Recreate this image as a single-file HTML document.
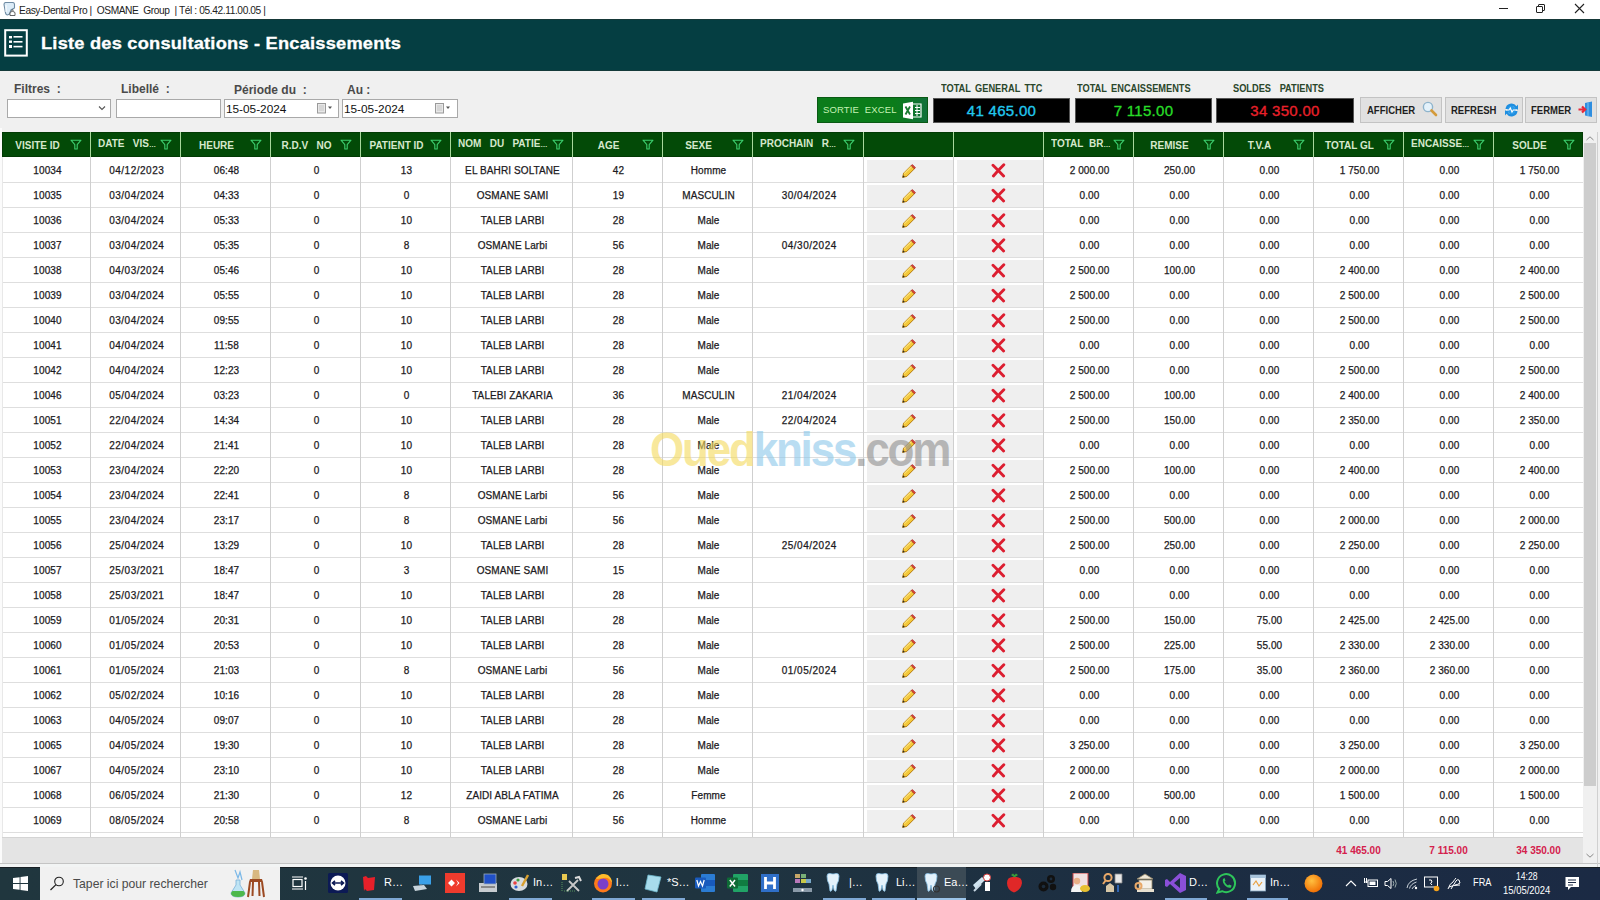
<!DOCTYPE html>
<html><head><meta charset="utf-8"><title>Liste des consultations</title>
<style>
*{margin:0;padding:0;box-sizing:border-box}
html,body{width:1600px;height:900px;overflow:hidden;background:#f0f0f0;font-family:"Liberation Sans",sans-serif;position:relative}
.a{position:absolute}
#titlebar{left:0;top:0;width:1600px;height:19px;background:#fff}
#ttxt{left:19px;top:4.5px;font-size:10.2px;color:#222;white-space:pre;letter-spacing:-0.4px}
#band{left:0;top:19px;width:1600px;height:52px;background:#053e42;border-top:1px solid #163838;border-bottom:1px solid #143a3a}
#btitle{left:41px;top:34px;font-size:16.5px;font-weight:bold;color:#fff;white-space:nowrap;letter-spacing:0.2px;transform:scaleX(1.105);transform-origin:0 0;-webkit-text-stroke:0.3px #fff}
.lbl{position:absolute;font-size:12px;font-weight:bold;color:#4a4a4a;white-space:pre}
.box{position:absolute;background:#fff;border:1px solid #a9a9a9}
.dtxt{position:absolute;font-size:11.8px;color:#111;white-space:nowrap}
.tl{position:absolute;font-size:10.5px;font-weight:bold;color:#2a462a;white-space:pre;word-spacing:2px;transform:scaleX(0.88);transform-origin:0 0}
.blk{position:absolute;background:#000;border:1px solid #555}
.val{position:absolute;font-size:15px;white-space:nowrap;text-align:center;letter-spacing:0.3px;-webkit-text-stroke:0.35px currentColor}
.btn{position:absolute;background:#e1e1e1;border:1px solid #c3c3c3}
.btxt{position:absolute;font-size:11px;font-weight:bold;color:#1e1e1e;white-space:nowrap;transform:scaleX(0.865);transform-origin:0 0}
#hdr{left:2px;top:132px;width:1581px;height:25px;background:#034a07;border:1px solid #023a04}
.hl{position:absolute;top:132px;width:1px;height:25px;background:#a8d89c}
.ht{position:absolute;font-size:10px;font-weight:bold;color:#d6e8cc;white-space:pre;overflow:hidden}
.fn{position:absolute}
.el{font-size:7px;letter-spacing:-0.5px}
#grid{left:2px;top:157px;width:1581px;height:681px;background:#fff;overflow:hidden}
.gl{position:absolute;width:1px;background:#cfcfcf}
.rl{position:absolute;height:1px;background:#dedede}
.t{position:absolute;font-size:10px;color:#1c1a22;text-align:center;white-space:nowrap;letter-spacing:0.1px;-webkit-text-stroke:0.25px #1c1a22}
.bcell{position:absolute;background:#efefef}
.ic{position:absolute}
#foot{left:2px;top:838px;width:1581px;height:25px;background:#e4e4e4}
.ft{position:absolute;font-size:10px;font-weight:bold;color:#d4204c;text-align:center;white-space:nowrap}
#sb{left:1583px;top:132px;width:14px;height:731px;background:#f0f0f0}
#taskbar{left:0;top:867px;width:1600px;height:33px;background:linear-gradient(90deg,#20363e 0%,#1f3440 45%,#1c2d42 75%,#1b2a44 100%);border-top:1px solid #181f24}
.tb{position:absolute;color:#fff;font-size:11px;white-space:nowrap}
.wm{position:absolute;font-weight:bold;font-size:44px;white-space:nowrap;letter-spacing:-2.2px}
</style></head><body>

<div id="titlebar" class="a"></div>
<svg class="a" style="left:3px;top:2px" width="13" height="14" viewBox="0 0 13 14"><path d="M1 2.5 Q1 0.5 3 0.5 H9.5 Q11.5 0.5 11.5 2.5 V6 L8 8 L6.5 12 L4.5 13 Q3 13 2.5 11 Z" fill="#dcecf8" stroke="#6f8ca4" stroke-width="1.1"/><path d="M3 3 V10" stroke="#fff" stroke-width="1"/><path d="M7 13.5 V11 Q7 9.5 9.5 9.5 Q12 9.5 12 11 V13.5 Z" fill="#fff" stroke="#555" stroke-width="0.9"/><path d="M8 8.5 Q9.5 6.5 11 8.5 Z" fill="#333"/></svg>
<div id="ttxt" class="a">Easy-Dental Pro |  OSMANE  Group  | T&eacute;l : 05.42.11.00.05 |</div>
<div class="a" style="left:1499px;top:8px;width:9px;height:1px;background:#222"></div>
<div class="a" style="left:1538px;top:4px;width:7px;height:7px;border:1px solid #222;border-radius:1px"></div>
<div class="a" style="left:1536px;top:6px;width:7px;height:7px;border:1px solid #222;background:#fff;border-radius:1px"></div>
<svg class="a" style="left:1574px;top:3px" width="11" height="11" viewBox="0 0 11 11"><path d="M1 1 L10 10 M10 1 L1 10" stroke="#222" stroke-width="1.1"/></svg>
<div id="band" class="a"></div>
<svg class="a" style="left:4px;top:29px" width="24" height="28" viewBox="0 0 24 28"><rect x="1.2" y="1.2" width="21.6" height="25.4" fill="none" stroke="#fff" stroke-width="2"/><rect x="5" y="7" width="3" height="2.4" fill="#fff"/><rect x="9.5" y="7" width="9" height="1.6" fill="#fff"/><rect x="5" y="11.5" width="3" height="2.4" fill="#fff"/><rect x="9.5" y="12" width="9" height="1.6" fill="#fff"/><rect x="5" y="16" width="3" height="3" fill="#fff"/><rect x="9.5" y="16.8" width="9" height="1.6" fill="#fff"/></svg>
<div id="btitle" class="a">Liste des consultations - Encaissements</div>
<div class="lbl" style="left:14px;top:82px">Filtres  :</div>
<div class="lbl" style="left:121px;top:82px">Libell&eacute;  :</div>
<div class="lbl" style="left:234px;top:83px">P&eacute;riode du  :</div>
<div class="lbl" style="left:347px;top:83px">Au :</div>
<div class="box" style="left:7px;top:99px;width:104px;height:19px"></div>
<svg class="a" style="left:98px;top:105px" width="8" height="6" viewBox="0 0 8 6"><path d="M1 1.5 L4 4.5 L7 1.5" fill="none" stroke="#555" stroke-width="1.1"/></svg>
<div class="box" style="left:116px;top:99px;width:105px;height:19px"></div>
<div class="box" style="left:224px;top:99px;width:115px;height:19px"></div>
<div class="dtxt" style="left:226px;top:102px">15-05-2024</div>
<svg class="a" style="left:317px;top:103px" width="16" height="11" viewBox="0 0 16 11"><rect x="0.5" y="0.5" width="8" height="9.5" fill="#e8e8e8" stroke="#9a9a9a" stroke-width="1"/><path d="M2 3 H7 M2 5 H7 M2 7 H7" stroke="#bbb" stroke-width="0.8"/><path d="M11 3.5 H15 L13 6 Z" fill="#555"/></svg>
<div class="box" style="left:342px;top:99px;width:116px;height:19px"></div>
<div class="dtxt" style="left:344px;top:102px">15-05-2024</div>
<svg class="a" style="left:435px;top:103px" width="16" height="11" viewBox="0 0 16 11"><rect x="0.5" y="0.5" width="8" height="9.5" fill="#e8e8e8" stroke="#9a9a9a" stroke-width="1"/><path d="M2 3 H7 M2 5 H7 M2 7 H7" stroke="#bbb" stroke-width="0.8"/><path d="M11 3.5 H15 L13 6 Z" fill="#555"/></svg>
<div class="a" style="left:817px;top:97px;width:111px;height:26px;background:linear-gradient(90deg,#0b7c1a 0%,#0b7c1a 70%,#11703a 100%);border:1px solid #0a5a14"></div>

<div class="a" style="left:823px;top:104px;font-size:9.5px;color:#c4f2b4;white-space:pre;letter-spacing:0.15px">SORTIE  EXCEL</div>
<svg class="a" style="left:902px;top:101px" width="20" height="19" viewBox="0 0 20 19"><path d="M1 2.5 L11 0.8 V18.2 L1 16.5 Z" fill="#fff"/><path d="M11 3 H19 V16 H11" fill="none" stroke="#fff" stroke-width="1.2"/><path d="M13 6.5 H18 M13 9.5 H18 M13 12.5 H18 M15 4 V15" stroke="#fff" stroke-width="1"/><path d="M3.5 5.5 L8 13.5 M8 5.5 L3.5 13.5" stroke="#1a7a30" stroke-width="1.8"/></svg>
<div class="tl" style="left:941px;top:81.5px">TOTAL GENERAL TTC</div>
<div class="blk" style="left:933px;top:98px;width:137px;height:25px"></div>
<div class="val" style="left:933px;top:102px;width:137px;color:#22c8ee">41 465.00</div>
<div class="tl" style="left:1077px;top:81.5px">TOTAL ENCAISSEMENTS</div>
<div class="blk" style="left:1075px;top:98px;width:137px;height:25px"></div>
<div class="val" style="left:1075px;top:102px;width:137px;color:#28dc28">7 115.00</div>
<div class="tl" style="left:1233px;top:81.5px">SOLDES  PATIENTS</div>
<div class="blk" style="left:1216px;top:98px;width:138px;height:25px"></div>
<div class="val" style="left:1216px;top:102px;width:138px;color:#e8202a">34 350.00</div>
<div class="btn" style="left:1360px;top:97px;width:82px;height:26px"></div>
<div class="btxt" style="left:1367px;top:104px">AFFICHER</div>
<div class="btn" style="left:1445px;top:97px;width:78px;height:26px"></div>
<div class="btxt" style="left:1451px;top:104px">REFRESH</div>
<div class="btn" style="left:1525px;top:97px;width:72px;height:26px"></div>
<div class="btxt" style="left:1531px;top:104px">FERMER</div>
<svg class="a" style="left:1422px;top:101px" width="16" height="16" viewBox="0 0 16 16"><circle cx="6" cy="6" r="4.6" fill="#e4f2fb" stroke="#8fb4cc" stroke-width="1.4"/><path d="M9.5 9.5 L14 14" stroke="#d49a3a" stroke-width="2.6" stroke-linecap="round"/></svg>
<svg class="a" style="left:1504px;top:102px" width="15" height="16" viewBox="0 0 15 16"><path d="M1.5 7 A6 6 0 0 1 12.5 4.2 L14 2.5 V7.5 H9 L11 5.6 A4 4 0 0 0 4 7 Z" fill="#1e8ee0"/><path d="M13.5 9 A6 6 0 0 1 2.5 11.8 L1 13.5 V8.5 H6 L4 10.4 A4 4 0 0 0 11 9 Z" fill="#1e8ee0"/><circle cx="7.5" cy="8" r="4.2" fill="#2a9ae8"/><path d="M2 8 H5 L6.3 6 L8 10 L9.3 8 H13" fill="none" stroke="#fff" stroke-width="1.1"/></svg>
<svg class="a" style="left:1578px;top:101px" width="16" height="17" viewBox="0 0 16 17"><path d="M7 2 L14 0.5 V16 L7 14.5 Z" fill="#2f8ee0"/><path d="M10 1.5 V15.5" stroke="#7cc4f4" stroke-width="1"/><path d="M0.5 8.5 H7 M4 5.5 L7.2 8.5 L4 11.5" fill="none" stroke="#e8283a" stroke-width="2.2"/></svg>
<div id="grid" class="a"></div>
<div id="hdr" class="a"></div>
<div class="fn" style="left:70px;top:139px"><svg class="fn" width="12" height="11" viewBox="0 0 12 11"><path d="M1 1.2 H11 L7.2 5.6 V10 H4.8 V5.6 Z" fill="none" stroke="#3ccf6e" stroke-width="1.1" stroke-linejoin="round"/></svg></div>
<div class="ht" style="left:3px;top:139.6px;width:69px;text-align:center">VISITE ID</div>
<div class="fn" style="left:160px;top:139px"><svg class="fn" width="12" height="11" viewBox="0 0 12 11"><path d="M1 1.2 H11 L7.2 5.6 V10 H4.8 V5.6 Z" fill="none" stroke="#3ccf6e" stroke-width="1.1" stroke-linejoin="round"/></svg></div>
<div class="ht" style="left:98px;top:137.8px;width:62px">DATE&nbsp;&nbsp; VIS<span class=el>&hellip;</span></div>
<div class="fn" style="left:250px;top:139px"><svg class="fn" width="12" height="11" viewBox="0 0 12 11"><path d="M1 1.2 H11 L7.2 5.6 V10 H4.8 V5.6 Z" fill="none" stroke="#3ccf6e" stroke-width="1.1" stroke-linejoin="round"/></svg></div>
<div class="ht" style="left:181px;top:139.6px;width:71px;text-align:center">HEURE</div>
<div class="fn" style="left:340px;top:139px"><svg class="fn" width="12" height="11" viewBox="0 0 12 11"><path d="M1 1.2 H11 L7.2 5.6 V10 H4.8 V5.6 Z" fill="none" stroke="#3ccf6e" stroke-width="1.1" stroke-linejoin="round"/></svg></div>
<div class="ht" style="left:271px;top:139.6px;width:71px;text-align:center">R.D.V&nbsp;&nbsp; NO</div>
<div class="fn" style="left:430px;top:139px"><svg class="fn" width="12" height="11" viewBox="0 0 12 11"><path d="M1 1.2 H11 L7.2 5.6 V10 H4.8 V5.6 Z" fill="none" stroke="#3ccf6e" stroke-width="1.1" stroke-linejoin="round"/></svg></div>
<div class="ht" style="left:361px;top:139.6px;width:71px;text-align:center">PATIENT ID</div>
<div class="fn" style="left:552px;top:139px"><svg class="fn" width="12" height="11" viewBox="0 0 12 11"><path d="M1 1.2 H11 L7.2 5.6 V10 H4.8 V5.6 Z" fill="none" stroke="#3ccf6e" stroke-width="1.1" stroke-linejoin="round"/></svg></div>
<div class="ht" style="left:458px;top:137.8px;width:94px">NOM&nbsp;&nbsp; DU&nbsp;&nbsp; PATIE<span class=el>&hellip;</span></div>
<div class="fn" style="left:642px;top:139px"><svg class="fn" width="12" height="11" viewBox="0 0 12 11"><path d="M1 1.2 H11 L7.2 5.6 V10 H4.8 V5.6 Z" fill="none" stroke="#3ccf6e" stroke-width="1.1" stroke-linejoin="round"/></svg></div>
<div class="ht" style="left:573px;top:139.6px;width:71px;text-align:center">AGE</div>
<div class="fn" style="left:732px;top:139px"><svg class="fn" width="12" height="11" viewBox="0 0 12 11"><path d="M1 1.2 H11 L7.2 5.6 V10 H4.8 V5.6 Z" fill="none" stroke="#3ccf6e" stroke-width="1.1" stroke-linejoin="round"/></svg></div>
<div class="ht" style="left:663px;top:139.6px;width:71px;text-align:center">SEXE</div>
<div class="fn" style="left:843px;top:139px"><svg class="fn" width="12" height="11" viewBox="0 0 12 11"><path d="M1 1.2 H11 L7.2 5.6 V10 H4.8 V5.6 Z" fill="none" stroke="#3ccf6e" stroke-width="1.1" stroke-linejoin="round"/></svg></div>
<div class="ht" style="left:760px;top:137.8px;width:83px">PROCHAIN&nbsp;&nbsp; R<span class=el>&hellip;</span></div>
<div class="fn" style="left:1113px;top:139px"><svg class="fn" width="12" height="11" viewBox="0 0 12 11"><path d="M1 1.2 H11 L7.2 5.6 V10 H4.8 V5.6 Z" fill="none" stroke="#3ccf6e" stroke-width="1.1" stroke-linejoin="round"/></svg></div>
<div class="ht" style="left:1051px;top:137.8px;width:62px">TOTAL&nbsp; BR<span class=el>&hellip;</span></div>
<div class="fn" style="left:1203px;top:139px"><svg class="fn" width="12" height="11" viewBox="0 0 12 11"><path d="M1 1.2 H11 L7.2 5.6 V10 H4.8 V5.6 Z" fill="none" stroke="#3ccf6e" stroke-width="1.1" stroke-linejoin="round"/></svg></div>
<div class="ht" style="left:1134px;top:139.6px;width:71px;text-align:center">REMISE</div>
<div class="fn" style="left:1293px;top:139px"><svg class="fn" width="12" height="11" viewBox="0 0 12 11"><path d="M1 1.2 H11 L7.2 5.6 V10 H4.8 V5.6 Z" fill="none" stroke="#3ccf6e" stroke-width="1.1" stroke-linejoin="round"/></svg></div>
<div class="ht" style="left:1224px;top:139.6px;width:71px;text-align:center">T.V.A</div>
<div class="fn" style="left:1383px;top:139px"><svg class="fn" width="12" height="11" viewBox="0 0 12 11"><path d="M1 1.2 H11 L7.2 5.6 V10 H4.8 V5.6 Z" fill="none" stroke="#3ccf6e" stroke-width="1.1" stroke-linejoin="round"/></svg></div>
<div class="ht" style="left:1314px;top:139.6px;width:71px;text-align:center">TOTAL GL</div>
<div class="fn" style="left:1473px;top:139px"><svg class="fn" width="12" height="11" viewBox="0 0 12 11"><path d="M1 1.2 H11 L7.2 5.6 V10 H4.8 V5.6 Z" fill="none" stroke="#3ccf6e" stroke-width="1.1" stroke-linejoin="round"/></svg></div>
<div class="ht" style="left:1411px;top:137.8px;width:62px">ENCAISSE<span class=el>&hellip;</span></div>
<div class="fn" style="left:1563px;top:139px"><svg class="fn" width="12" height="11" viewBox="0 0 12 11"><path d="M1 1.2 H11 L7.2 5.6 V10 H4.8 V5.6 Z" fill="none" stroke="#3ccf6e" stroke-width="1.1" stroke-linejoin="round"/></svg></div>
<div class="ht" style="left:1494px;top:139.6px;width:71px;text-align:center">SOLDE</div>
<div class="hl" style="left:90px"></div>
<div class="hl" style="left:180px"></div>
<div class="hl" style="left:270px"></div>
<div class="hl" style="left:360px"></div>
<div class="hl" style="left:450px"></div>
<div class="hl" style="left:572px"></div>
<div class="hl" style="left:662px"></div>
<div class="hl" style="left:752px"></div>
<div class="hl" style="left:863px"></div>
<div class="hl" style="left:953px"></div>
<div class="hl" style="left:1043px"></div>
<div class="hl" style="left:1133px"></div>
<div class="hl" style="left:1223px"></div>
<div class="hl" style="left:1313px"></div>
<div class="hl" style="left:1403px"></div>
<div class="hl" style="left:1493px"></div>
<div class="t" style="left:4px;top:165px;width:87px">10034</div>
<div class="t" style="left:92px;top:165px;width:89px;letter-spacing:0.5px;text-indent:0.5px">04/12/2023</div>
<div class="t" style="left:182px;top:165px;width:89px">06:48</div>
<div class="t" style="left:272px;top:165px;width:89px">0</div>
<div class="t" style="left:362px;top:165px;width:89px">13</div>
<div class="t" style="left:452px;top:165px;width:121px">EL BAHRI SOLTANE</div>
<div class="t" style="left:574px;top:165px;width:89px">42</div>
<div class="t" style="left:664px;top:165px;width:89px">Homme</div>
<div class="bcell" style="left:867px;top:160px;width:86px;height:22px"></div>
<div class="ic" style="left:901px;top:164px"><svg width="15" height="15" viewBox="0 0 15 15"><path d="M1.6 13.4 L2.6 9.2 L10.2 1.6 L13.4 4.8 L5.8 12.4 Z" fill="#f4c83a" stroke="#b07000" stroke-width="0.9" stroke-linejoin="round"/><path d="M3.2 9.6 L10.8 2.2" stroke="#fbe27a" stroke-width="1.2"/><path d="M10.2 1.6 L11.4 0.6 L14.4 3.6 L13.4 4.8 Z" fill="#e04a3a" stroke="#a02020" stroke-width="0.7"/><path d="M1.6 13.4 L2.1 11.2 L3.8 12.9 Z" fill="#2a2a2a"/></svg></div>
<div class="bcell" style="left:957px;top:160px;width:86px;height:22px"></div>
<div class="ic" style="left:991px;top:163px"><svg width="15" height="15" viewBox="0 0 15 15"><path d="M2 2.2 Q7 7 12.6 13 M12.8 1.8 Q7 7.5 2.4 13" fill="none" stroke="#dc1e30" stroke-width="2.9" stroke-linecap="round"/></svg></div>
<div class="t" style="left:1045px;top:165px;width:89px">2 000.00</div>
<div class="t" style="left:1135px;top:165px;width:89px">250.00</div>
<div class="t" style="left:1225px;top:165px;width:89px">0.00</div>
<div class="t" style="left:1315px;top:165px;width:89px">1 750.00</div>
<div class="t" style="left:1405px;top:165px;width:89px">0.00</div>
<div class="t" style="left:1495px;top:165px;width:89px">1 750.00</div>
<div class="rl" style="left:2px;top:182px;width:1581px"></div>
<div class="t" style="left:4px;top:190px;width:87px">10035</div>
<div class="t" style="left:92px;top:190px;width:89px;letter-spacing:0.5px;text-indent:0.5px">03/04/2024</div>
<div class="t" style="left:182px;top:190px;width:89px">04:33</div>
<div class="t" style="left:272px;top:190px;width:89px">0</div>
<div class="t" style="left:362px;top:190px;width:89px">0</div>
<div class="t" style="left:452px;top:190px;width:121px">OSMANE SAMI</div>
<div class="t" style="left:574px;top:190px;width:89px">19</div>
<div class="t" style="left:664px;top:190px;width:89px">MASCULIN</div>
<div class="t" style="left:754px;top:190px;width:110px;letter-spacing:0.5px;text-indent:0.5px">30/04/2024</div>
<div class="bcell" style="left:867px;top:185px;width:86px;height:22px"></div>
<div class="ic" style="left:901px;top:189px"><svg width="15" height="15" viewBox="0 0 15 15"><path d="M1.6 13.4 L2.6 9.2 L10.2 1.6 L13.4 4.8 L5.8 12.4 Z" fill="#f4c83a" stroke="#b07000" stroke-width="0.9" stroke-linejoin="round"/><path d="M3.2 9.6 L10.8 2.2" stroke="#fbe27a" stroke-width="1.2"/><path d="M10.2 1.6 L11.4 0.6 L14.4 3.6 L13.4 4.8 Z" fill="#e04a3a" stroke="#a02020" stroke-width="0.7"/><path d="M1.6 13.4 L2.1 11.2 L3.8 12.9 Z" fill="#2a2a2a"/></svg></div>
<div class="bcell" style="left:957px;top:185px;width:86px;height:22px"></div>
<div class="ic" style="left:991px;top:188px"><svg width="15" height="15" viewBox="0 0 15 15"><path d="M2 2.2 Q7 7 12.6 13 M12.8 1.8 Q7 7.5 2.4 13" fill="none" stroke="#dc1e30" stroke-width="2.9" stroke-linecap="round"/></svg></div>
<div class="t" style="left:1045px;top:190px;width:89px">0.00</div>
<div class="t" style="left:1135px;top:190px;width:89px">0.00</div>
<div class="t" style="left:1225px;top:190px;width:89px">0.00</div>
<div class="t" style="left:1315px;top:190px;width:89px">0.00</div>
<div class="t" style="left:1405px;top:190px;width:89px">0.00</div>
<div class="t" style="left:1495px;top:190px;width:89px">0.00</div>
<div class="rl" style="left:2px;top:207px;width:1581px"></div>
<div class="t" style="left:4px;top:215px;width:87px">10036</div>
<div class="t" style="left:92px;top:215px;width:89px;letter-spacing:0.5px;text-indent:0.5px">03/04/2024</div>
<div class="t" style="left:182px;top:215px;width:89px">05:33</div>
<div class="t" style="left:272px;top:215px;width:89px">0</div>
<div class="t" style="left:362px;top:215px;width:89px">10</div>
<div class="t" style="left:452px;top:215px;width:121px">TALEB LARBI</div>
<div class="t" style="left:574px;top:215px;width:89px">28</div>
<div class="t" style="left:664px;top:215px;width:89px">Male</div>
<div class="bcell" style="left:867px;top:210px;width:86px;height:22px"></div>
<div class="ic" style="left:901px;top:214px"><svg width="15" height="15" viewBox="0 0 15 15"><path d="M1.6 13.4 L2.6 9.2 L10.2 1.6 L13.4 4.8 L5.8 12.4 Z" fill="#f4c83a" stroke="#b07000" stroke-width="0.9" stroke-linejoin="round"/><path d="M3.2 9.6 L10.8 2.2" stroke="#fbe27a" stroke-width="1.2"/><path d="M10.2 1.6 L11.4 0.6 L14.4 3.6 L13.4 4.8 Z" fill="#e04a3a" stroke="#a02020" stroke-width="0.7"/><path d="M1.6 13.4 L2.1 11.2 L3.8 12.9 Z" fill="#2a2a2a"/></svg></div>
<div class="bcell" style="left:957px;top:210px;width:86px;height:22px"></div>
<div class="ic" style="left:991px;top:213px"><svg width="15" height="15" viewBox="0 0 15 15"><path d="M2 2.2 Q7 7 12.6 13 M12.8 1.8 Q7 7.5 2.4 13" fill="none" stroke="#dc1e30" stroke-width="2.9" stroke-linecap="round"/></svg></div>
<div class="t" style="left:1045px;top:215px;width:89px">0.00</div>
<div class="t" style="left:1135px;top:215px;width:89px">0.00</div>
<div class="t" style="left:1225px;top:215px;width:89px">0.00</div>
<div class="t" style="left:1315px;top:215px;width:89px">0.00</div>
<div class="t" style="left:1405px;top:215px;width:89px">0.00</div>
<div class="t" style="left:1495px;top:215px;width:89px">0.00</div>
<div class="rl" style="left:2px;top:232px;width:1581px"></div>
<div class="t" style="left:4px;top:240px;width:87px">10037</div>
<div class="t" style="left:92px;top:240px;width:89px;letter-spacing:0.5px;text-indent:0.5px">03/04/2024</div>
<div class="t" style="left:182px;top:240px;width:89px">05:35</div>
<div class="t" style="left:272px;top:240px;width:89px">0</div>
<div class="t" style="left:362px;top:240px;width:89px">8</div>
<div class="t" style="left:452px;top:240px;width:121px">OSMANE Larbi</div>
<div class="t" style="left:574px;top:240px;width:89px">56</div>
<div class="t" style="left:664px;top:240px;width:89px">Male</div>
<div class="t" style="left:754px;top:240px;width:110px;letter-spacing:0.5px;text-indent:0.5px">04/30/2024</div>
<div class="bcell" style="left:867px;top:235px;width:86px;height:22px"></div>
<div class="ic" style="left:901px;top:239px"><svg width="15" height="15" viewBox="0 0 15 15"><path d="M1.6 13.4 L2.6 9.2 L10.2 1.6 L13.4 4.8 L5.8 12.4 Z" fill="#f4c83a" stroke="#b07000" stroke-width="0.9" stroke-linejoin="round"/><path d="M3.2 9.6 L10.8 2.2" stroke="#fbe27a" stroke-width="1.2"/><path d="M10.2 1.6 L11.4 0.6 L14.4 3.6 L13.4 4.8 Z" fill="#e04a3a" stroke="#a02020" stroke-width="0.7"/><path d="M1.6 13.4 L2.1 11.2 L3.8 12.9 Z" fill="#2a2a2a"/></svg></div>
<div class="bcell" style="left:957px;top:235px;width:86px;height:22px"></div>
<div class="ic" style="left:991px;top:238px"><svg width="15" height="15" viewBox="0 0 15 15"><path d="M2 2.2 Q7 7 12.6 13 M12.8 1.8 Q7 7.5 2.4 13" fill="none" stroke="#dc1e30" stroke-width="2.9" stroke-linecap="round"/></svg></div>
<div class="t" style="left:1045px;top:240px;width:89px">0.00</div>
<div class="t" style="left:1135px;top:240px;width:89px">0.00</div>
<div class="t" style="left:1225px;top:240px;width:89px">0.00</div>
<div class="t" style="left:1315px;top:240px;width:89px">0.00</div>
<div class="t" style="left:1405px;top:240px;width:89px">0.00</div>
<div class="t" style="left:1495px;top:240px;width:89px">0.00</div>
<div class="rl" style="left:2px;top:257px;width:1581px"></div>
<div class="t" style="left:4px;top:265px;width:87px">10038</div>
<div class="t" style="left:92px;top:265px;width:89px;letter-spacing:0.5px;text-indent:0.5px">04/03/2024</div>
<div class="t" style="left:182px;top:265px;width:89px">05:46</div>
<div class="t" style="left:272px;top:265px;width:89px">0</div>
<div class="t" style="left:362px;top:265px;width:89px">10</div>
<div class="t" style="left:452px;top:265px;width:121px">TALEB LARBI</div>
<div class="t" style="left:574px;top:265px;width:89px">28</div>
<div class="t" style="left:664px;top:265px;width:89px">Male</div>
<div class="bcell" style="left:867px;top:260px;width:86px;height:22px"></div>
<div class="ic" style="left:901px;top:264px"><svg width="15" height="15" viewBox="0 0 15 15"><path d="M1.6 13.4 L2.6 9.2 L10.2 1.6 L13.4 4.8 L5.8 12.4 Z" fill="#f4c83a" stroke="#b07000" stroke-width="0.9" stroke-linejoin="round"/><path d="M3.2 9.6 L10.8 2.2" stroke="#fbe27a" stroke-width="1.2"/><path d="M10.2 1.6 L11.4 0.6 L14.4 3.6 L13.4 4.8 Z" fill="#e04a3a" stroke="#a02020" stroke-width="0.7"/><path d="M1.6 13.4 L2.1 11.2 L3.8 12.9 Z" fill="#2a2a2a"/></svg></div>
<div class="bcell" style="left:957px;top:260px;width:86px;height:22px"></div>
<div class="ic" style="left:991px;top:263px"><svg width="15" height="15" viewBox="0 0 15 15"><path d="M2 2.2 Q7 7 12.6 13 M12.8 1.8 Q7 7.5 2.4 13" fill="none" stroke="#dc1e30" stroke-width="2.9" stroke-linecap="round"/></svg></div>
<div class="t" style="left:1045px;top:265px;width:89px">2 500.00</div>
<div class="t" style="left:1135px;top:265px;width:89px">100.00</div>
<div class="t" style="left:1225px;top:265px;width:89px">0.00</div>
<div class="t" style="left:1315px;top:265px;width:89px">2 400.00</div>
<div class="t" style="left:1405px;top:265px;width:89px">0.00</div>
<div class="t" style="left:1495px;top:265px;width:89px">2 400.00</div>
<div class="rl" style="left:2px;top:282px;width:1581px"></div>
<div class="t" style="left:4px;top:290px;width:87px">10039</div>
<div class="t" style="left:92px;top:290px;width:89px;letter-spacing:0.5px;text-indent:0.5px">03/04/2024</div>
<div class="t" style="left:182px;top:290px;width:89px">05:55</div>
<div class="t" style="left:272px;top:290px;width:89px">0</div>
<div class="t" style="left:362px;top:290px;width:89px">10</div>
<div class="t" style="left:452px;top:290px;width:121px">TALEB LARBI</div>
<div class="t" style="left:574px;top:290px;width:89px">28</div>
<div class="t" style="left:664px;top:290px;width:89px">Male</div>
<div class="bcell" style="left:867px;top:285px;width:86px;height:22px"></div>
<div class="ic" style="left:901px;top:289px"><svg width="15" height="15" viewBox="0 0 15 15"><path d="M1.6 13.4 L2.6 9.2 L10.2 1.6 L13.4 4.8 L5.8 12.4 Z" fill="#f4c83a" stroke="#b07000" stroke-width="0.9" stroke-linejoin="round"/><path d="M3.2 9.6 L10.8 2.2" stroke="#fbe27a" stroke-width="1.2"/><path d="M10.2 1.6 L11.4 0.6 L14.4 3.6 L13.4 4.8 Z" fill="#e04a3a" stroke="#a02020" stroke-width="0.7"/><path d="M1.6 13.4 L2.1 11.2 L3.8 12.9 Z" fill="#2a2a2a"/></svg></div>
<div class="bcell" style="left:957px;top:285px;width:86px;height:22px"></div>
<div class="ic" style="left:991px;top:288px"><svg width="15" height="15" viewBox="0 0 15 15"><path d="M2 2.2 Q7 7 12.6 13 M12.8 1.8 Q7 7.5 2.4 13" fill="none" stroke="#dc1e30" stroke-width="2.9" stroke-linecap="round"/></svg></div>
<div class="t" style="left:1045px;top:290px;width:89px">2 500.00</div>
<div class="t" style="left:1135px;top:290px;width:89px">0.00</div>
<div class="t" style="left:1225px;top:290px;width:89px">0.00</div>
<div class="t" style="left:1315px;top:290px;width:89px">2 500.00</div>
<div class="t" style="left:1405px;top:290px;width:89px">0.00</div>
<div class="t" style="left:1495px;top:290px;width:89px">2 500.00</div>
<div class="rl" style="left:2px;top:307px;width:1581px"></div>
<div class="t" style="left:4px;top:315px;width:87px">10040</div>
<div class="t" style="left:92px;top:315px;width:89px;letter-spacing:0.5px;text-indent:0.5px">03/04/2024</div>
<div class="t" style="left:182px;top:315px;width:89px">09:55</div>
<div class="t" style="left:272px;top:315px;width:89px">0</div>
<div class="t" style="left:362px;top:315px;width:89px">10</div>
<div class="t" style="left:452px;top:315px;width:121px">TALEB LARBI</div>
<div class="t" style="left:574px;top:315px;width:89px">28</div>
<div class="t" style="left:664px;top:315px;width:89px">Male</div>
<div class="bcell" style="left:867px;top:310px;width:86px;height:22px"></div>
<div class="ic" style="left:901px;top:314px"><svg width="15" height="15" viewBox="0 0 15 15"><path d="M1.6 13.4 L2.6 9.2 L10.2 1.6 L13.4 4.8 L5.8 12.4 Z" fill="#f4c83a" stroke="#b07000" stroke-width="0.9" stroke-linejoin="round"/><path d="M3.2 9.6 L10.8 2.2" stroke="#fbe27a" stroke-width="1.2"/><path d="M10.2 1.6 L11.4 0.6 L14.4 3.6 L13.4 4.8 Z" fill="#e04a3a" stroke="#a02020" stroke-width="0.7"/><path d="M1.6 13.4 L2.1 11.2 L3.8 12.9 Z" fill="#2a2a2a"/></svg></div>
<div class="bcell" style="left:957px;top:310px;width:86px;height:22px"></div>
<div class="ic" style="left:991px;top:313px"><svg width="15" height="15" viewBox="0 0 15 15"><path d="M2 2.2 Q7 7 12.6 13 M12.8 1.8 Q7 7.5 2.4 13" fill="none" stroke="#dc1e30" stroke-width="2.9" stroke-linecap="round"/></svg></div>
<div class="t" style="left:1045px;top:315px;width:89px">2 500.00</div>
<div class="t" style="left:1135px;top:315px;width:89px">0.00</div>
<div class="t" style="left:1225px;top:315px;width:89px">0.00</div>
<div class="t" style="left:1315px;top:315px;width:89px">2 500.00</div>
<div class="t" style="left:1405px;top:315px;width:89px">0.00</div>
<div class="t" style="left:1495px;top:315px;width:89px">2 500.00</div>
<div class="rl" style="left:2px;top:332px;width:1581px"></div>
<div class="t" style="left:4px;top:340px;width:87px">10041</div>
<div class="t" style="left:92px;top:340px;width:89px;letter-spacing:0.5px;text-indent:0.5px">04/04/2024</div>
<div class="t" style="left:182px;top:340px;width:89px">11:58</div>
<div class="t" style="left:272px;top:340px;width:89px">0</div>
<div class="t" style="left:362px;top:340px;width:89px">10</div>
<div class="t" style="left:452px;top:340px;width:121px">TALEB LARBI</div>
<div class="t" style="left:574px;top:340px;width:89px">28</div>
<div class="t" style="left:664px;top:340px;width:89px">Male</div>
<div class="bcell" style="left:867px;top:335px;width:86px;height:22px"></div>
<div class="ic" style="left:901px;top:339px"><svg width="15" height="15" viewBox="0 0 15 15"><path d="M1.6 13.4 L2.6 9.2 L10.2 1.6 L13.4 4.8 L5.8 12.4 Z" fill="#f4c83a" stroke="#b07000" stroke-width="0.9" stroke-linejoin="round"/><path d="M3.2 9.6 L10.8 2.2" stroke="#fbe27a" stroke-width="1.2"/><path d="M10.2 1.6 L11.4 0.6 L14.4 3.6 L13.4 4.8 Z" fill="#e04a3a" stroke="#a02020" stroke-width="0.7"/><path d="M1.6 13.4 L2.1 11.2 L3.8 12.9 Z" fill="#2a2a2a"/></svg></div>
<div class="bcell" style="left:957px;top:335px;width:86px;height:22px"></div>
<div class="ic" style="left:991px;top:338px"><svg width="15" height="15" viewBox="0 0 15 15"><path d="M2 2.2 Q7 7 12.6 13 M12.8 1.8 Q7 7.5 2.4 13" fill="none" stroke="#dc1e30" stroke-width="2.9" stroke-linecap="round"/></svg></div>
<div class="t" style="left:1045px;top:340px;width:89px">0.00</div>
<div class="t" style="left:1135px;top:340px;width:89px">0.00</div>
<div class="t" style="left:1225px;top:340px;width:89px">0.00</div>
<div class="t" style="left:1315px;top:340px;width:89px">0.00</div>
<div class="t" style="left:1405px;top:340px;width:89px">0.00</div>
<div class="t" style="left:1495px;top:340px;width:89px">0.00</div>
<div class="rl" style="left:2px;top:357px;width:1581px"></div>
<div class="t" style="left:4px;top:365px;width:87px">10042</div>
<div class="t" style="left:92px;top:365px;width:89px;letter-spacing:0.5px;text-indent:0.5px">04/04/2024</div>
<div class="t" style="left:182px;top:365px;width:89px">12:23</div>
<div class="t" style="left:272px;top:365px;width:89px">0</div>
<div class="t" style="left:362px;top:365px;width:89px">10</div>
<div class="t" style="left:452px;top:365px;width:121px">TALEB LARBI</div>
<div class="t" style="left:574px;top:365px;width:89px">28</div>
<div class="t" style="left:664px;top:365px;width:89px">Male</div>
<div class="bcell" style="left:867px;top:360px;width:86px;height:22px"></div>
<div class="ic" style="left:901px;top:364px"><svg width="15" height="15" viewBox="0 0 15 15"><path d="M1.6 13.4 L2.6 9.2 L10.2 1.6 L13.4 4.8 L5.8 12.4 Z" fill="#f4c83a" stroke="#b07000" stroke-width="0.9" stroke-linejoin="round"/><path d="M3.2 9.6 L10.8 2.2" stroke="#fbe27a" stroke-width="1.2"/><path d="M10.2 1.6 L11.4 0.6 L14.4 3.6 L13.4 4.8 Z" fill="#e04a3a" stroke="#a02020" stroke-width="0.7"/><path d="M1.6 13.4 L2.1 11.2 L3.8 12.9 Z" fill="#2a2a2a"/></svg></div>
<div class="bcell" style="left:957px;top:360px;width:86px;height:22px"></div>
<div class="ic" style="left:991px;top:363px"><svg width="15" height="15" viewBox="0 0 15 15"><path d="M2 2.2 Q7 7 12.6 13 M12.8 1.8 Q7 7.5 2.4 13" fill="none" stroke="#dc1e30" stroke-width="2.9" stroke-linecap="round"/></svg></div>
<div class="t" style="left:1045px;top:365px;width:89px">2 500.00</div>
<div class="t" style="left:1135px;top:365px;width:89px">0.00</div>
<div class="t" style="left:1225px;top:365px;width:89px">0.00</div>
<div class="t" style="left:1315px;top:365px;width:89px">2 500.00</div>
<div class="t" style="left:1405px;top:365px;width:89px">0.00</div>
<div class="t" style="left:1495px;top:365px;width:89px">2 500.00</div>
<div class="rl" style="left:2px;top:382px;width:1581px"></div>
<div class="t" style="left:4px;top:390px;width:87px">10046</div>
<div class="t" style="left:92px;top:390px;width:89px;letter-spacing:0.5px;text-indent:0.5px">05/04/2024</div>
<div class="t" style="left:182px;top:390px;width:89px">03:23</div>
<div class="t" style="left:272px;top:390px;width:89px">0</div>
<div class="t" style="left:362px;top:390px;width:89px">0</div>
<div class="t" style="left:452px;top:390px;width:121px">TALEBI ZAKARIA</div>
<div class="t" style="left:574px;top:390px;width:89px">36</div>
<div class="t" style="left:664px;top:390px;width:89px">MASCULIN</div>
<div class="t" style="left:754px;top:390px;width:110px;letter-spacing:0.5px;text-indent:0.5px">21/04/2024</div>
<div class="bcell" style="left:867px;top:385px;width:86px;height:22px"></div>
<div class="ic" style="left:901px;top:389px"><svg width="15" height="15" viewBox="0 0 15 15"><path d="M1.6 13.4 L2.6 9.2 L10.2 1.6 L13.4 4.8 L5.8 12.4 Z" fill="#f4c83a" stroke="#b07000" stroke-width="0.9" stroke-linejoin="round"/><path d="M3.2 9.6 L10.8 2.2" stroke="#fbe27a" stroke-width="1.2"/><path d="M10.2 1.6 L11.4 0.6 L14.4 3.6 L13.4 4.8 Z" fill="#e04a3a" stroke="#a02020" stroke-width="0.7"/><path d="M1.6 13.4 L2.1 11.2 L3.8 12.9 Z" fill="#2a2a2a"/></svg></div>
<div class="bcell" style="left:957px;top:385px;width:86px;height:22px"></div>
<div class="ic" style="left:991px;top:388px"><svg width="15" height="15" viewBox="0 0 15 15"><path d="M2 2.2 Q7 7 12.6 13 M12.8 1.8 Q7 7.5 2.4 13" fill="none" stroke="#dc1e30" stroke-width="2.9" stroke-linecap="round"/></svg></div>
<div class="t" style="left:1045px;top:390px;width:89px">2 500.00</div>
<div class="t" style="left:1135px;top:390px;width:89px">100.00</div>
<div class="t" style="left:1225px;top:390px;width:89px">0.00</div>
<div class="t" style="left:1315px;top:390px;width:89px">2 400.00</div>
<div class="t" style="left:1405px;top:390px;width:89px">0.00</div>
<div class="t" style="left:1495px;top:390px;width:89px">2 400.00</div>
<div class="rl" style="left:2px;top:407px;width:1581px"></div>
<div class="t" style="left:4px;top:415px;width:87px">10051</div>
<div class="t" style="left:92px;top:415px;width:89px;letter-spacing:0.5px;text-indent:0.5px">22/04/2024</div>
<div class="t" style="left:182px;top:415px;width:89px">14:34</div>
<div class="t" style="left:272px;top:415px;width:89px">0</div>
<div class="t" style="left:362px;top:415px;width:89px">10</div>
<div class="t" style="left:452px;top:415px;width:121px">TALEB LARBI</div>
<div class="t" style="left:574px;top:415px;width:89px">28</div>
<div class="t" style="left:664px;top:415px;width:89px">Male</div>
<div class="t" style="left:754px;top:415px;width:110px;letter-spacing:0.5px;text-indent:0.5px">22/04/2024</div>
<div class="bcell" style="left:867px;top:410px;width:86px;height:22px"></div>
<div class="ic" style="left:901px;top:414px"><svg width="15" height="15" viewBox="0 0 15 15"><path d="M1.6 13.4 L2.6 9.2 L10.2 1.6 L13.4 4.8 L5.8 12.4 Z" fill="#f4c83a" stroke="#b07000" stroke-width="0.9" stroke-linejoin="round"/><path d="M3.2 9.6 L10.8 2.2" stroke="#fbe27a" stroke-width="1.2"/><path d="M10.2 1.6 L11.4 0.6 L14.4 3.6 L13.4 4.8 Z" fill="#e04a3a" stroke="#a02020" stroke-width="0.7"/><path d="M1.6 13.4 L2.1 11.2 L3.8 12.9 Z" fill="#2a2a2a"/></svg></div>
<div class="bcell" style="left:957px;top:410px;width:86px;height:22px"></div>
<div class="ic" style="left:991px;top:413px"><svg width="15" height="15" viewBox="0 0 15 15"><path d="M2 2.2 Q7 7 12.6 13 M12.8 1.8 Q7 7.5 2.4 13" fill="none" stroke="#dc1e30" stroke-width="2.9" stroke-linecap="round"/></svg></div>
<div class="t" style="left:1045px;top:415px;width:89px">2 500.00</div>
<div class="t" style="left:1135px;top:415px;width:89px">150.00</div>
<div class="t" style="left:1225px;top:415px;width:89px">0.00</div>
<div class="t" style="left:1315px;top:415px;width:89px">2 350.00</div>
<div class="t" style="left:1405px;top:415px;width:89px">0.00</div>
<div class="t" style="left:1495px;top:415px;width:89px">2 350.00</div>
<div class="rl" style="left:2px;top:432px;width:1581px"></div>
<div class="t" style="left:4px;top:440px;width:87px">10052</div>
<div class="t" style="left:92px;top:440px;width:89px;letter-spacing:0.5px;text-indent:0.5px">22/04/2024</div>
<div class="t" style="left:182px;top:440px;width:89px">21:41</div>
<div class="t" style="left:272px;top:440px;width:89px">0</div>
<div class="t" style="left:362px;top:440px;width:89px">10</div>
<div class="t" style="left:452px;top:440px;width:121px">TALEB LARBI</div>
<div class="t" style="left:574px;top:440px;width:89px">28</div>
<div class="t" style="left:664px;top:440px;width:89px">Male</div>
<div class="bcell" style="left:867px;top:435px;width:86px;height:22px"></div>
<div class="ic" style="left:901px;top:439px"><svg width="15" height="15" viewBox="0 0 15 15"><path d="M1.6 13.4 L2.6 9.2 L10.2 1.6 L13.4 4.8 L5.8 12.4 Z" fill="#f4c83a" stroke="#b07000" stroke-width="0.9" stroke-linejoin="round"/><path d="M3.2 9.6 L10.8 2.2" stroke="#fbe27a" stroke-width="1.2"/><path d="M10.2 1.6 L11.4 0.6 L14.4 3.6 L13.4 4.8 Z" fill="#e04a3a" stroke="#a02020" stroke-width="0.7"/><path d="M1.6 13.4 L2.1 11.2 L3.8 12.9 Z" fill="#2a2a2a"/></svg></div>
<div class="bcell" style="left:957px;top:435px;width:86px;height:22px"></div>
<div class="ic" style="left:991px;top:438px"><svg width="15" height="15" viewBox="0 0 15 15"><path d="M2 2.2 Q7 7 12.6 13 M12.8 1.8 Q7 7.5 2.4 13" fill="none" stroke="#dc1e30" stroke-width="2.9" stroke-linecap="round"/></svg></div>
<div class="t" style="left:1045px;top:440px;width:89px">0.00</div>
<div class="t" style="left:1135px;top:440px;width:89px">0.00</div>
<div class="t" style="left:1225px;top:440px;width:89px">0.00</div>
<div class="t" style="left:1315px;top:440px;width:89px">0.00</div>
<div class="t" style="left:1405px;top:440px;width:89px">0.00</div>
<div class="t" style="left:1495px;top:440px;width:89px">0.00</div>
<div class="rl" style="left:2px;top:457px;width:1581px"></div>
<div class="t" style="left:4px;top:465px;width:87px">10053</div>
<div class="t" style="left:92px;top:465px;width:89px;letter-spacing:0.5px;text-indent:0.5px">23/04/2024</div>
<div class="t" style="left:182px;top:465px;width:89px">22:20</div>
<div class="t" style="left:272px;top:465px;width:89px">0</div>
<div class="t" style="left:362px;top:465px;width:89px">10</div>
<div class="t" style="left:452px;top:465px;width:121px">TALEB LARBI</div>
<div class="t" style="left:574px;top:465px;width:89px">28</div>
<div class="t" style="left:664px;top:465px;width:89px">Male</div>
<div class="bcell" style="left:867px;top:460px;width:86px;height:22px"></div>
<div class="ic" style="left:901px;top:464px"><svg width="15" height="15" viewBox="0 0 15 15"><path d="M1.6 13.4 L2.6 9.2 L10.2 1.6 L13.4 4.8 L5.8 12.4 Z" fill="#f4c83a" stroke="#b07000" stroke-width="0.9" stroke-linejoin="round"/><path d="M3.2 9.6 L10.8 2.2" stroke="#fbe27a" stroke-width="1.2"/><path d="M10.2 1.6 L11.4 0.6 L14.4 3.6 L13.4 4.8 Z" fill="#e04a3a" stroke="#a02020" stroke-width="0.7"/><path d="M1.6 13.4 L2.1 11.2 L3.8 12.9 Z" fill="#2a2a2a"/></svg></div>
<div class="bcell" style="left:957px;top:460px;width:86px;height:22px"></div>
<div class="ic" style="left:991px;top:463px"><svg width="15" height="15" viewBox="0 0 15 15"><path d="M2 2.2 Q7 7 12.6 13 M12.8 1.8 Q7 7.5 2.4 13" fill="none" stroke="#dc1e30" stroke-width="2.9" stroke-linecap="round"/></svg></div>
<div class="t" style="left:1045px;top:465px;width:89px">2 500.00</div>
<div class="t" style="left:1135px;top:465px;width:89px">100.00</div>
<div class="t" style="left:1225px;top:465px;width:89px">0.00</div>
<div class="t" style="left:1315px;top:465px;width:89px">2 400.00</div>
<div class="t" style="left:1405px;top:465px;width:89px">0.00</div>
<div class="t" style="left:1495px;top:465px;width:89px">2 400.00</div>
<div class="rl" style="left:2px;top:482px;width:1581px"></div>
<div class="t" style="left:4px;top:490px;width:87px">10054</div>
<div class="t" style="left:92px;top:490px;width:89px;letter-spacing:0.5px;text-indent:0.5px">23/04/2024</div>
<div class="t" style="left:182px;top:490px;width:89px">22:41</div>
<div class="t" style="left:272px;top:490px;width:89px">0</div>
<div class="t" style="left:362px;top:490px;width:89px">8</div>
<div class="t" style="left:452px;top:490px;width:121px">OSMANE Larbi</div>
<div class="t" style="left:574px;top:490px;width:89px">56</div>
<div class="t" style="left:664px;top:490px;width:89px">Male</div>
<div class="bcell" style="left:867px;top:485px;width:86px;height:22px"></div>
<div class="ic" style="left:901px;top:489px"><svg width="15" height="15" viewBox="0 0 15 15"><path d="M1.6 13.4 L2.6 9.2 L10.2 1.6 L13.4 4.8 L5.8 12.4 Z" fill="#f4c83a" stroke="#b07000" stroke-width="0.9" stroke-linejoin="round"/><path d="M3.2 9.6 L10.8 2.2" stroke="#fbe27a" stroke-width="1.2"/><path d="M10.2 1.6 L11.4 0.6 L14.4 3.6 L13.4 4.8 Z" fill="#e04a3a" stroke="#a02020" stroke-width="0.7"/><path d="M1.6 13.4 L2.1 11.2 L3.8 12.9 Z" fill="#2a2a2a"/></svg></div>
<div class="bcell" style="left:957px;top:485px;width:86px;height:22px"></div>
<div class="ic" style="left:991px;top:488px"><svg width="15" height="15" viewBox="0 0 15 15"><path d="M2 2.2 Q7 7 12.6 13 M12.8 1.8 Q7 7.5 2.4 13" fill="none" stroke="#dc1e30" stroke-width="2.9" stroke-linecap="round"/></svg></div>
<div class="t" style="left:1045px;top:490px;width:89px">2 500.00</div>
<div class="t" style="left:1135px;top:490px;width:89px">0.00</div>
<div class="t" style="left:1225px;top:490px;width:89px">0.00</div>
<div class="t" style="left:1315px;top:490px;width:89px">0.00</div>
<div class="t" style="left:1405px;top:490px;width:89px">0.00</div>
<div class="t" style="left:1495px;top:490px;width:89px">0.00</div>
<div class="rl" style="left:2px;top:507px;width:1581px"></div>
<div class="t" style="left:4px;top:515px;width:87px">10055</div>
<div class="t" style="left:92px;top:515px;width:89px;letter-spacing:0.5px;text-indent:0.5px">23/04/2024</div>
<div class="t" style="left:182px;top:515px;width:89px">23:17</div>
<div class="t" style="left:272px;top:515px;width:89px">0</div>
<div class="t" style="left:362px;top:515px;width:89px">8</div>
<div class="t" style="left:452px;top:515px;width:121px">OSMANE Larbi</div>
<div class="t" style="left:574px;top:515px;width:89px">56</div>
<div class="t" style="left:664px;top:515px;width:89px">Male</div>
<div class="bcell" style="left:867px;top:510px;width:86px;height:22px"></div>
<div class="ic" style="left:901px;top:514px"><svg width="15" height="15" viewBox="0 0 15 15"><path d="M1.6 13.4 L2.6 9.2 L10.2 1.6 L13.4 4.8 L5.8 12.4 Z" fill="#f4c83a" stroke="#b07000" stroke-width="0.9" stroke-linejoin="round"/><path d="M3.2 9.6 L10.8 2.2" stroke="#fbe27a" stroke-width="1.2"/><path d="M10.2 1.6 L11.4 0.6 L14.4 3.6 L13.4 4.8 Z" fill="#e04a3a" stroke="#a02020" stroke-width="0.7"/><path d="M1.6 13.4 L2.1 11.2 L3.8 12.9 Z" fill="#2a2a2a"/></svg></div>
<div class="bcell" style="left:957px;top:510px;width:86px;height:22px"></div>
<div class="ic" style="left:991px;top:513px"><svg width="15" height="15" viewBox="0 0 15 15"><path d="M2 2.2 Q7 7 12.6 13 M12.8 1.8 Q7 7.5 2.4 13" fill="none" stroke="#dc1e30" stroke-width="2.9" stroke-linecap="round"/></svg></div>
<div class="t" style="left:1045px;top:515px;width:89px">2 500.00</div>
<div class="t" style="left:1135px;top:515px;width:89px">500.00</div>
<div class="t" style="left:1225px;top:515px;width:89px">0.00</div>
<div class="t" style="left:1315px;top:515px;width:89px">2 000.00</div>
<div class="t" style="left:1405px;top:515px;width:89px">0.00</div>
<div class="t" style="left:1495px;top:515px;width:89px">2 000.00</div>
<div class="rl" style="left:2px;top:532px;width:1581px"></div>
<div class="t" style="left:4px;top:540px;width:87px">10056</div>
<div class="t" style="left:92px;top:540px;width:89px;letter-spacing:0.5px;text-indent:0.5px">25/04/2024</div>
<div class="t" style="left:182px;top:540px;width:89px">13:29</div>
<div class="t" style="left:272px;top:540px;width:89px">0</div>
<div class="t" style="left:362px;top:540px;width:89px">10</div>
<div class="t" style="left:452px;top:540px;width:121px">TALEB LARBI</div>
<div class="t" style="left:574px;top:540px;width:89px">28</div>
<div class="t" style="left:664px;top:540px;width:89px">Male</div>
<div class="t" style="left:754px;top:540px;width:110px;letter-spacing:0.5px;text-indent:0.5px">25/04/2024</div>
<div class="bcell" style="left:867px;top:535px;width:86px;height:22px"></div>
<div class="ic" style="left:901px;top:539px"><svg width="15" height="15" viewBox="0 0 15 15"><path d="M1.6 13.4 L2.6 9.2 L10.2 1.6 L13.4 4.8 L5.8 12.4 Z" fill="#f4c83a" stroke="#b07000" stroke-width="0.9" stroke-linejoin="round"/><path d="M3.2 9.6 L10.8 2.2" stroke="#fbe27a" stroke-width="1.2"/><path d="M10.2 1.6 L11.4 0.6 L14.4 3.6 L13.4 4.8 Z" fill="#e04a3a" stroke="#a02020" stroke-width="0.7"/><path d="M1.6 13.4 L2.1 11.2 L3.8 12.9 Z" fill="#2a2a2a"/></svg></div>
<div class="bcell" style="left:957px;top:535px;width:86px;height:22px"></div>
<div class="ic" style="left:991px;top:538px"><svg width="15" height="15" viewBox="0 0 15 15"><path d="M2 2.2 Q7 7 12.6 13 M12.8 1.8 Q7 7.5 2.4 13" fill="none" stroke="#dc1e30" stroke-width="2.9" stroke-linecap="round"/></svg></div>
<div class="t" style="left:1045px;top:540px;width:89px">2 500.00</div>
<div class="t" style="left:1135px;top:540px;width:89px">250.00</div>
<div class="t" style="left:1225px;top:540px;width:89px">0.00</div>
<div class="t" style="left:1315px;top:540px;width:89px">2 250.00</div>
<div class="t" style="left:1405px;top:540px;width:89px">0.00</div>
<div class="t" style="left:1495px;top:540px;width:89px">2 250.00</div>
<div class="rl" style="left:2px;top:557px;width:1581px"></div>
<div class="t" style="left:4px;top:565px;width:87px">10057</div>
<div class="t" style="left:92px;top:565px;width:89px;letter-spacing:0.5px;text-indent:0.5px">25/03/2021</div>
<div class="t" style="left:182px;top:565px;width:89px">18:47</div>
<div class="t" style="left:272px;top:565px;width:89px">0</div>
<div class="t" style="left:362px;top:565px;width:89px">3</div>
<div class="t" style="left:452px;top:565px;width:121px">OSMANE SAMI</div>
<div class="t" style="left:574px;top:565px;width:89px">15</div>
<div class="t" style="left:664px;top:565px;width:89px">Male</div>
<div class="bcell" style="left:867px;top:560px;width:86px;height:22px"></div>
<div class="ic" style="left:901px;top:564px"><svg width="15" height="15" viewBox="0 0 15 15"><path d="M1.6 13.4 L2.6 9.2 L10.2 1.6 L13.4 4.8 L5.8 12.4 Z" fill="#f4c83a" stroke="#b07000" stroke-width="0.9" stroke-linejoin="round"/><path d="M3.2 9.6 L10.8 2.2" stroke="#fbe27a" stroke-width="1.2"/><path d="M10.2 1.6 L11.4 0.6 L14.4 3.6 L13.4 4.8 Z" fill="#e04a3a" stroke="#a02020" stroke-width="0.7"/><path d="M1.6 13.4 L2.1 11.2 L3.8 12.9 Z" fill="#2a2a2a"/></svg></div>
<div class="bcell" style="left:957px;top:560px;width:86px;height:22px"></div>
<div class="ic" style="left:991px;top:563px"><svg width="15" height="15" viewBox="0 0 15 15"><path d="M2 2.2 Q7 7 12.6 13 M12.8 1.8 Q7 7.5 2.4 13" fill="none" stroke="#dc1e30" stroke-width="2.9" stroke-linecap="round"/></svg></div>
<div class="t" style="left:1045px;top:565px;width:89px">0.00</div>
<div class="t" style="left:1135px;top:565px;width:89px">0.00</div>
<div class="t" style="left:1225px;top:565px;width:89px">0.00</div>
<div class="t" style="left:1315px;top:565px;width:89px">0.00</div>
<div class="t" style="left:1405px;top:565px;width:89px">0.00</div>
<div class="t" style="left:1495px;top:565px;width:89px">0.00</div>
<div class="rl" style="left:2px;top:582px;width:1581px"></div>
<div class="t" style="left:4px;top:590px;width:87px">10058</div>
<div class="t" style="left:92px;top:590px;width:89px;letter-spacing:0.5px;text-indent:0.5px">25/03/2021</div>
<div class="t" style="left:182px;top:590px;width:89px">18:47</div>
<div class="t" style="left:272px;top:590px;width:89px">0</div>
<div class="t" style="left:362px;top:590px;width:89px">10</div>
<div class="t" style="left:452px;top:590px;width:121px">TALEB LARBI</div>
<div class="t" style="left:574px;top:590px;width:89px">28</div>
<div class="t" style="left:664px;top:590px;width:89px">Male</div>
<div class="bcell" style="left:867px;top:585px;width:86px;height:22px"></div>
<div class="ic" style="left:901px;top:589px"><svg width="15" height="15" viewBox="0 0 15 15"><path d="M1.6 13.4 L2.6 9.2 L10.2 1.6 L13.4 4.8 L5.8 12.4 Z" fill="#f4c83a" stroke="#b07000" stroke-width="0.9" stroke-linejoin="round"/><path d="M3.2 9.6 L10.8 2.2" stroke="#fbe27a" stroke-width="1.2"/><path d="M10.2 1.6 L11.4 0.6 L14.4 3.6 L13.4 4.8 Z" fill="#e04a3a" stroke="#a02020" stroke-width="0.7"/><path d="M1.6 13.4 L2.1 11.2 L3.8 12.9 Z" fill="#2a2a2a"/></svg></div>
<div class="bcell" style="left:957px;top:585px;width:86px;height:22px"></div>
<div class="ic" style="left:991px;top:588px"><svg width="15" height="15" viewBox="0 0 15 15"><path d="M2 2.2 Q7 7 12.6 13 M12.8 1.8 Q7 7.5 2.4 13" fill="none" stroke="#dc1e30" stroke-width="2.9" stroke-linecap="round"/></svg></div>
<div class="t" style="left:1045px;top:590px;width:89px">0.00</div>
<div class="t" style="left:1135px;top:590px;width:89px">0.00</div>
<div class="t" style="left:1225px;top:590px;width:89px">0.00</div>
<div class="t" style="left:1315px;top:590px;width:89px">0.00</div>
<div class="t" style="left:1405px;top:590px;width:89px">0.00</div>
<div class="t" style="left:1495px;top:590px;width:89px">0.00</div>
<div class="rl" style="left:2px;top:607px;width:1581px"></div>
<div class="t" style="left:4px;top:615px;width:87px">10059</div>
<div class="t" style="left:92px;top:615px;width:89px;letter-spacing:0.5px;text-indent:0.5px">01/05/2024</div>
<div class="t" style="left:182px;top:615px;width:89px">20:31</div>
<div class="t" style="left:272px;top:615px;width:89px">0</div>
<div class="t" style="left:362px;top:615px;width:89px">10</div>
<div class="t" style="left:452px;top:615px;width:121px">TALEB LARBI</div>
<div class="t" style="left:574px;top:615px;width:89px">28</div>
<div class="t" style="left:664px;top:615px;width:89px">Male</div>
<div class="bcell" style="left:867px;top:610px;width:86px;height:22px"></div>
<div class="ic" style="left:901px;top:614px"><svg width="15" height="15" viewBox="0 0 15 15"><path d="M1.6 13.4 L2.6 9.2 L10.2 1.6 L13.4 4.8 L5.8 12.4 Z" fill="#f4c83a" stroke="#b07000" stroke-width="0.9" stroke-linejoin="round"/><path d="M3.2 9.6 L10.8 2.2" stroke="#fbe27a" stroke-width="1.2"/><path d="M10.2 1.6 L11.4 0.6 L14.4 3.6 L13.4 4.8 Z" fill="#e04a3a" stroke="#a02020" stroke-width="0.7"/><path d="M1.6 13.4 L2.1 11.2 L3.8 12.9 Z" fill="#2a2a2a"/></svg></div>
<div class="bcell" style="left:957px;top:610px;width:86px;height:22px"></div>
<div class="ic" style="left:991px;top:613px"><svg width="15" height="15" viewBox="0 0 15 15"><path d="M2 2.2 Q7 7 12.6 13 M12.8 1.8 Q7 7.5 2.4 13" fill="none" stroke="#dc1e30" stroke-width="2.9" stroke-linecap="round"/></svg></div>
<div class="t" style="left:1045px;top:615px;width:89px">2 500.00</div>
<div class="t" style="left:1135px;top:615px;width:89px">150.00</div>
<div class="t" style="left:1225px;top:615px;width:89px">75.00</div>
<div class="t" style="left:1315px;top:615px;width:89px">2 425.00</div>
<div class="t" style="left:1405px;top:615px;width:89px">2 425.00</div>
<div class="t" style="left:1495px;top:615px;width:89px">0.00</div>
<div class="rl" style="left:2px;top:632px;width:1581px"></div>
<div class="t" style="left:4px;top:640px;width:87px">10060</div>
<div class="t" style="left:92px;top:640px;width:89px;letter-spacing:0.5px;text-indent:0.5px">01/05/2024</div>
<div class="t" style="left:182px;top:640px;width:89px">20:53</div>
<div class="t" style="left:272px;top:640px;width:89px">0</div>
<div class="t" style="left:362px;top:640px;width:89px">10</div>
<div class="t" style="left:452px;top:640px;width:121px">TALEB LARBI</div>
<div class="t" style="left:574px;top:640px;width:89px">28</div>
<div class="t" style="left:664px;top:640px;width:89px">Male</div>
<div class="bcell" style="left:867px;top:635px;width:86px;height:22px"></div>
<div class="ic" style="left:901px;top:639px"><svg width="15" height="15" viewBox="0 0 15 15"><path d="M1.6 13.4 L2.6 9.2 L10.2 1.6 L13.4 4.8 L5.8 12.4 Z" fill="#f4c83a" stroke="#b07000" stroke-width="0.9" stroke-linejoin="round"/><path d="M3.2 9.6 L10.8 2.2" stroke="#fbe27a" stroke-width="1.2"/><path d="M10.2 1.6 L11.4 0.6 L14.4 3.6 L13.4 4.8 Z" fill="#e04a3a" stroke="#a02020" stroke-width="0.7"/><path d="M1.6 13.4 L2.1 11.2 L3.8 12.9 Z" fill="#2a2a2a"/></svg></div>
<div class="bcell" style="left:957px;top:635px;width:86px;height:22px"></div>
<div class="ic" style="left:991px;top:638px"><svg width="15" height="15" viewBox="0 0 15 15"><path d="M2 2.2 Q7 7 12.6 13 M12.8 1.8 Q7 7.5 2.4 13" fill="none" stroke="#dc1e30" stroke-width="2.9" stroke-linecap="round"/></svg></div>
<div class="t" style="left:1045px;top:640px;width:89px">2 500.00</div>
<div class="t" style="left:1135px;top:640px;width:89px">225.00</div>
<div class="t" style="left:1225px;top:640px;width:89px">55.00</div>
<div class="t" style="left:1315px;top:640px;width:89px">2 330.00</div>
<div class="t" style="left:1405px;top:640px;width:89px">2 330.00</div>
<div class="t" style="left:1495px;top:640px;width:89px">0.00</div>
<div class="rl" style="left:2px;top:657px;width:1581px"></div>
<div class="t" style="left:4px;top:665px;width:87px">10061</div>
<div class="t" style="left:92px;top:665px;width:89px;letter-spacing:0.5px;text-indent:0.5px">01/05/2024</div>
<div class="t" style="left:182px;top:665px;width:89px">21:03</div>
<div class="t" style="left:272px;top:665px;width:89px">0</div>
<div class="t" style="left:362px;top:665px;width:89px">8</div>
<div class="t" style="left:452px;top:665px;width:121px">OSMANE Larbi</div>
<div class="t" style="left:574px;top:665px;width:89px">56</div>
<div class="t" style="left:664px;top:665px;width:89px">Male</div>
<div class="t" style="left:754px;top:665px;width:110px;letter-spacing:0.5px;text-indent:0.5px">01/05/2024</div>
<div class="bcell" style="left:867px;top:660px;width:86px;height:22px"></div>
<div class="ic" style="left:901px;top:664px"><svg width="15" height="15" viewBox="0 0 15 15"><path d="M1.6 13.4 L2.6 9.2 L10.2 1.6 L13.4 4.8 L5.8 12.4 Z" fill="#f4c83a" stroke="#b07000" stroke-width="0.9" stroke-linejoin="round"/><path d="M3.2 9.6 L10.8 2.2" stroke="#fbe27a" stroke-width="1.2"/><path d="M10.2 1.6 L11.4 0.6 L14.4 3.6 L13.4 4.8 Z" fill="#e04a3a" stroke="#a02020" stroke-width="0.7"/><path d="M1.6 13.4 L2.1 11.2 L3.8 12.9 Z" fill="#2a2a2a"/></svg></div>
<div class="bcell" style="left:957px;top:660px;width:86px;height:22px"></div>
<div class="ic" style="left:991px;top:663px"><svg width="15" height="15" viewBox="0 0 15 15"><path d="M2 2.2 Q7 7 12.6 13 M12.8 1.8 Q7 7.5 2.4 13" fill="none" stroke="#dc1e30" stroke-width="2.9" stroke-linecap="round"/></svg></div>
<div class="t" style="left:1045px;top:665px;width:89px">2 500.00</div>
<div class="t" style="left:1135px;top:665px;width:89px">175.00</div>
<div class="t" style="left:1225px;top:665px;width:89px">35.00</div>
<div class="t" style="left:1315px;top:665px;width:89px">2 360.00</div>
<div class="t" style="left:1405px;top:665px;width:89px">2 360.00</div>
<div class="t" style="left:1495px;top:665px;width:89px">0.00</div>
<div class="rl" style="left:2px;top:682px;width:1581px"></div>
<div class="t" style="left:4px;top:690px;width:87px">10062</div>
<div class="t" style="left:92px;top:690px;width:89px;letter-spacing:0.5px;text-indent:0.5px">05/02/2024</div>
<div class="t" style="left:182px;top:690px;width:89px">10:16</div>
<div class="t" style="left:272px;top:690px;width:89px">0</div>
<div class="t" style="left:362px;top:690px;width:89px">10</div>
<div class="t" style="left:452px;top:690px;width:121px">TALEB LARBI</div>
<div class="t" style="left:574px;top:690px;width:89px">28</div>
<div class="t" style="left:664px;top:690px;width:89px">Male</div>
<div class="bcell" style="left:867px;top:685px;width:86px;height:22px"></div>
<div class="ic" style="left:901px;top:689px"><svg width="15" height="15" viewBox="0 0 15 15"><path d="M1.6 13.4 L2.6 9.2 L10.2 1.6 L13.4 4.8 L5.8 12.4 Z" fill="#f4c83a" stroke="#b07000" stroke-width="0.9" stroke-linejoin="round"/><path d="M3.2 9.6 L10.8 2.2" stroke="#fbe27a" stroke-width="1.2"/><path d="M10.2 1.6 L11.4 0.6 L14.4 3.6 L13.4 4.8 Z" fill="#e04a3a" stroke="#a02020" stroke-width="0.7"/><path d="M1.6 13.4 L2.1 11.2 L3.8 12.9 Z" fill="#2a2a2a"/></svg></div>
<div class="bcell" style="left:957px;top:685px;width:86px;height:22px"></div>
<div class="ic" style="left:991px;top:688px"><svg width="15" height="15" viewBox="0 0 15 15"><path d="M2 2.2 Q7 7 12.6 13 M12.8 1.8 Q7 7.5 2.4 13" fill="none" stroke="#dc1e30" stroke-width="2.9" stroke-linecap="round"/></svg></div>
<div class="t" style="left:1045px;top:690px;width:89px">0.00</div>
<div class="t" style="left:1135px;top:690px;width:89px">0.00</div>
<div class="t" style="left:1225px;top:690px;width:89px">0.00</div>
<div class="t" style="left:1315px;top:690px;width:89px">0.00</div>
<div class="t" style="left:1405px;top:690px;width:89px">0.00</div>
<div class="t" style="left:1495px;top:690px;width:89px">0.00</div>
<div class="rl" style="left:2px;top:707px;width:1581px"></div>
<div class="t" style="left:4px;top:715px;width:87px">10063</div>
<div class="t" style="left:92px;top:715px;width:89px;letter-spacing:0.5px;text-indent:0.5px">04/05/2024</div>
<div class="t" style="left:182px;top:715px;width:89px">09:07</div>
<div class="t" style="left:272px;top:715px;width:89px">0</div>
<div class="t" style="left:362px;top:715px;width:89px">10</div>
<div class="t" style="left:452px;top:715px;width:121px">TALEB LARBI</div>
<div class="t" style="left:574px;top:715px;width:89px">28</div>
<div class="t" style="left:664px;top:715px;width:89px">Male</div>
<div class="bcell" style="left:867px;top:710px;width:86px;height:22px"></div>
<div class="ic" style="left:901px;top:714px"><svg width="15" height="15" viewBox="0 0 15 15"><path d="M1.6 13.4 L2.6 9.2 L10.2 1.6 L13.4 4.8 L5.8 12.4 Z" fill="#f4c83a" stroke="#b07000" stroke-width="0.9" stroke-linejoin="round"/><path d="M3.2 9.6 L10.8 2.2" stroke="#fbe27a" stroke-width="1.2"/><path d="M10.2 1.6 L11.4 0.6 L14.4 3.6 L13.4 4.8 Z" fill="#e04a3a" stroke="#a02020" stroke-width="0.7"/><path d="M1.6 13.4 L2.1 11.2 L3.8 12.9 Z" fill="#2a2a2a"/></svg></div>
<div class="bcell" style="left:957px;top:710px;width:86px;height:22px"></div>
<div class="ic" style="left:991px;top:713px"><svg width="15" height="15" viewBox="0 0 15 15"><path d="M2 2.2 Q7 7 12.6 13 M12.8 1.8 Q7 7.5 2.4 13" fill="none" stroke="#dc1e30" stroke-width="2.9" stroke-linecap="round"/></svg></div>
<div class="t" style="left:1045px;top:715px;width:89px">0.00</div>
<div class="t" style="left:1135px;top:715px;width:89px">0.00</div>
<div class="t" style="left:1225px;top:715px;width:89px">0.00</div>
<div class="t" style="left:1315px;top:715px;width:89px">0.00</div>
<div class="t" style="left:1405px;top:715px;width:89px">0.00</div>
<div class="t" style="left:1495px;top:715px;width:89px">0.00</div>
<div class="rl" style="left:2px;top:732px;width:1581px"></div>
<div class="t" style="left:4px;top:740px;width:87px">10065</div>
<div class="t" style="left:92px;top:740px;width:89px;letter-spacing:0.5px;text-indent:0.5px">04/05/2024</div>
<div class="t" style="left:182px;top:740px;width:89px">19:30</div>
<div class="t" style="left:272px;top:740px;width:89px">0</div>
<div class="t" style="left:362px;top:740px;width:89px">10</div>
<div class="t" style="left:452px;top:740px;width:121px">TALEB LARBI</div>
<div class="t" style="left:574px;top:740px;width:89px">28</div>
<div class="t" style="left:664px;top:740px;width:89px">Male</div>
<div class="bcell" style="left:867px;top:735px;width:86px;height:22px"></div>
<div class="ic" style="left:901px;top:739px"><svg width="15" height="15" viewBox="0 0 15 15"><path d="M1.6 13.4 L2.6 9.2 L10.2 1.6 L13.4 4.8 L5.8 12.4 Z" fill="#f4c83a" stroke="#b07000" stroke-width="0.9" stroke-linejoin="round"/><path d="M3.2 9.6 L10.8 2.2" stroke="#fbe27a" stroke-width="1.2"/><path d="M10.2 1.6 L11.4 0.6 L14.4 3.6 L13.4 4.8 Z" fill="#e04a3a" stroke="#a02020" stroke-width="0.7"/><path d="M1.6 13.4 L2.1 11.2 L3.8 12.9 Z" fill="#2a2a2a"/></svg></div>
<div class="bcell" style="left:957px;top:735px;width:86px;height:22px"></div>
<div class="ic" style="left:991px;top:738px"><svg width="15" height="15" viewBox="0 0 15 15"><path d="M2 2.2 Q7 7 12.6 13 M12.8 1.8 Q7 7.5 2.4 13" fill="none" stroke="#dc1e30" stroke-width="2.9" stroke-linecap="round"/></svg></div>
<div class="t" style="left:1045px;top:740px;width:89px">3 250.00</div>
<div class="t" style="left:1135px;top:740px;width:89px">0.00</div>
<div class="t" style="left:1225px;top:740px;width:89px">0.00</div>
<div class="t" style="left:1315px;top:740px;width:89px">3 250.00</div>
<div class="t" style="left:1405px;top:740px;width:89px">0.00</div>
<div class="t" style="left:1495px;top:740px;width:89px">3 250.00</div>
<div class="rl" style="left:2px;top:757px;width:1581px"></div>
<div class="t" style="left:4px;top:765px;width:87px">10067</div>
<div class="t" style="left:92px;top:765px;width:89px;letter-spacing:0.5px;text-indent:0.5px">04/05/2024</div>
<div class="t" style="left:182px;top:765px;width:89px">23:10</div>
<div class="t" style="left:272px;top:765px;width:89px">0</div>
<div class="t" style="left:362px;top:765px;width:89px">10</div>
<div class="t" style="left:452px;top:765px;width:121px">TALEB LARBI</div>
<div class="t" style="left:574px;top:765px;width:89px">28</div>
<div class="t" style="left:664px;top:765px;width:89px">Male</div>
<div class="bcell" style="left:867px;top:760px;width:86px;height:22px"></div>
<div class="ic" style="left:901px;top:764px"><svg width="15" height="15" viewBox="0 0 15 15"><path d="M1.6 13.4 L2.6 9.2 L10.2 1.6 L13.4 4.8 L5.8 12.4 Z" fill="#f4c83a" stroke="#b07000" stroke-width="0.9" stroke-linejoin="round"/><path d="M3.2 9.6 L10.8 2.2" stroke="#fbe27a" stroke-width="1.2"/><path d="M10.2 1.6 L11.4 0.6 L14.4 3.6 L13.4 4.8 Z" fill="#e04a3a" stroke="#a02020" stroke-width="0.7"/><path d="M1.6 13.4 L2.1 11.2 L3.8 12.9 Z" fill="#2a2a2a"/></svg></div>
<div class="bcell" style="left:957px;top:760px;width:86px;height:22px"></div>
<div class="ic" style="left:991px;top:763px"><svg width="15" height="15" viewBox="0 0 15 15"><path d="M2 2.2 Q7 7 12.6 13 M12.8 1.8 Q7 7.5 2.4 13" fill="none" stroke="#dc1e30" stroke-width="2.9" stroke-linecap="round"/></svg></div>
<div class="t" style="left:1045px;top:765px;width:89px">2 000.00</div>
<div class="t" style="left:1135px;top:765px;width:89px">0.00</div>
<div class="t" style="left:1225px;top:765px;width:89px">0.00</div>
<div class="t" style="left:1315px;top:765px;width:89px">2 000.00</div>
<div class="t" style="left:1405px;top:765px;width:89px">0.00</div>
<div class="t" style="left:1495px;top:765px;width:89px">2 000.00</div>
<div class="rl" style="left:2px;top:782px;width:1581px"></div>
<div class="t" style="left:4px;top:790px;width:87px">10068</div>
<div class="t" style="left:92px;top:790px;width:89px;letter-spacing:0.5px;text-indent:0.5px">06/05/2024</div>
<div class="t" style="left:182px;top:790px;width:89px">21:30</div>
<div class="t" style="left:272px;top:790px;width:89px">0</div>
<div class="t" style="left:362px;top:790px;width:89px">12</div>
<div class="t" style="left:452px;top:790px;width:121px">ZAIDI ABLA FATIMA</div>
<div class="t" style="left:574px;top:790px;width:89px">26</div>
<div class="t" style="left:664px;top:790px;width:89px">Femme</div>
<div class="bcell" style="left:867px;top:785px;width:86px;height:22px"></div>
<div class="ic" style="left:901px;top:789px"><svg width="15" height="15" viewBox="0 0 15 15"><path d="M1.6 13.4 L2.6 9.2 L10.2 1.6 L13.4 4.8 L5.8 12.4 Z" fill="#f4c83a" stroke="#b07000" stroke-width="0.9" stroke-linejoin="round"/><path d="M3.2 9.6 L10.8 2.2" stroke="#fbe27a" stroke-width="1.2"/><path d="M10.2 1.6 L11.4 0.6 L14.4 3.6 L13.4 4.8 Z" fill="#e04a3a" stroke="#a02020" stroke-width="0.7"/><path d="M1.6 13.4 L2.1 11.2 L3.8 12.9 Z" fill="#2a2a2a"/></svg></div>
<div class="bcell" style="left:957px;top:785px;width:86px;height:22px"></div>
<div class="ic" style="left:991px;top:788px"><svg width="15" height="15" viewBox="0 0 15 15"><path d="M2 2.2 Q7 7 12.6 13 M12.8 1.8 Q7 7.5 2.4 13" fill="none" stroke="#dc1e30" stroke-width="2.9" stroke-linecap="round"/></svg></div>
<div class="t" style="left:1045px;top:790px;width:89px">2 000.00</div>
<div class="t" style="left:1135px;top:790px;width:89px">500.00</div>
<div class="t" style="left:1225px;top:790px;width:89px">0.00</div>
<div class="t" style="left:1315px;top:790px;width:89px">1 500.00</div>
<div class="t" style="left:1405px;top:790px;width:89px">0.00</div>
<div class="t" style="left:1495px;top:790px;width:89px">1 500.00</div>
<div class="rl" style="left:2px;top:807px;width:1581px"></div>
<div class="t" style="left:4px;top:815px;width:87px">10069</div>
<div class="t" style="left:92px;top:815px;width:89px;letter-spacing:0.5px;text-indent:0.5px">08/05/2024</div>
<div class="t" style="left:182px;top:815px;width:89px">20:58</div>
<div class="t" style="left:272px;top:815px;width:89px">0</div>
<div class="t" style="left:362px;top:815px;width:89px">8</div>
<div class="t" style="left:452px;top:815px;width:121px">OSMANE Larbi</div>
<div class="t" style="left:574px;top:815px;width:89px">56</div>
<div class="t" style="left:664px;top:815px;width:89px">Homme</div>
<div class="bcell" style="left:867px;top:810px;width:86px;height:22px"></div>
<div class="ic" style="left:901px;top:814px"><svg width="15" height="15" viewBox="0 0 15 15"><path d="M1.6 13.4 L2.6 9.2 L10.2 1.6 L13.4 4.8 L5.8 12.4 Z" fill="#f4c83a" stroke="#b07000" stroke-width="0.9" stroke-linejoin="round"/><path d="M3.2 9.6 L10.8 2.2" stroke="#fbe27a" stroke-width="1.2"/><path d="M10.2 1.6 L11.4 0.6 L14.4 3.6 L13.4 4.8 Z" fill="#e04a3a" stroke="#a02020" stroke-width="0.7"/><path d="M1.6 13.4 L2.1 11.2 L3.8 12.9 Z" fill="#2a2a2a"/></svg></div>
<div class="bcell" style="left:957px;top:810px;width:86px;height:22px"></div>
<div class="ic" style="left:991px;top:813px"><svg width="15" height="15" viewBox="0 0 15 15"><path d="M2 2.2 Q7 7 12.6 13 M12.8 1.8 Q7 7.5 2.4 13" fill="none" stroke="#dc1e30" stroke-width="2.9" stroke-linecap="round"/></svg></div>
<div class="t" style="left:1045px;top:815px;width:89px">0.00</div>
<div class="t" style="left:1135px;top:815px;width:89px">0.00</div>
<div class="t" style="left:1225px;top:815px;width:89px">0.00</div>
<div class="t" style="left:1315px;top:815px;width:89px">0.00</div>
<div class="t" style="left:1405px;top:815px;width:89px">0.00</div>
<div class="t" style="left:1495px;top:815px;width:89px">0.00</div>
<div class="rl" style="left:2px;top:832px;width:1581px"></div>
<div class="rl" style="left:2px;top:857px;width:1581px"></div>
<div class="gl" style="left:90px;top:157px;height:681px"></div>
<div class="gl" style="left:180px;top:157px;height:681px"></div>
<div class="gl" style="left:270px;top:157px;height:681px"></div>
<div class="gl" style="left:360px;top:157px;height:681px"></div>
<div class="gl" style="left:450px;top:157px;height:681px"></div>
<div class="gl" style="left:572px;top:157px;height:681px"></div>
<div class="gl" style="left:662px;top:157px;height:681px"></div>
<div class="gl" style="left:752px;top:157px;height:681px"></div>
<div class="gl" style="left:863px;top:157px;height:681px"></div>
<div class="gl" style="left:953px;top:157px;height:681px"></div>
<div class="gl" style="left:1043px;top:157px;height:681px"></div>
<div class="gl" style="left:1133px;top:157px;height:681px"></div>
<div class="gl" style="left:1223px;top:157px;height:681px"></div>
<div class="gl" style="left:1313px;top:157px;height:681px"></div>
<div class="gl" style="left:1403px;top:157px;height:681px"></div>
<div class="gl" style="left:1493px;top:157px;height:681px"></div>
<div class="a" style="left:0px;top:128px;width:2px;height:735px;background:#fbfbfb"></div>
<div class="a" style="left:2px;top:157px;width:1px;height:681px;background:#e8e8e8"></div>
<div id="foot" class="a"></div>
<div class="ft" style="left:1314px;top:845px;width:89px">41 465.00</div>
<div class="ft" style="left:1404px;top:845px;width:89px">7 115.00</div>
<div class="ft" style="left:1494px;top:845px;width:89px">34 350.00</div>
<div class="a" style="left:0px;top:863px;width:1600px;height:4px;background:#f2f4f4;border-top:1px solid #c4c4c4"></div>
<div class="a" style="left:2px;top:837px;width:1581px;height:1px;background:#d4d4d4"></div>
<div id="sb" class="a"></div>
<div class="a" style="left:1584px;top:143px;width:12px;height:643px;background:#cdcdcd"></div>
<svg class="a" style="left:1585px;top:135px" width="10" height="7" viewBox="0 0 10 7"><path d="M1.5 5 L5 1.8 L8.5 5" fill="none" stroke="#888" stroke-width="1"/></svg>
<svg class="a" style="left:1585px;top:852px" width="10" height="7" viewBox="0 0 10 7"><path d="M1.5 2 L5 5.2 L8.5 2" fill="none" stroke="#888" stroke-width="1"/></svg>
<div class="a" style="left:1597px;top:132px;width:1px;height:735px;background:#d0d0d0"></div>
<div class="wm" style="left:650px;top:422px;opacity:0.6;transform:scaleY(1.09);transform-origin:0 0"><span style="color:#f4da5c">Oued</span><span style="color:#8cc8ea">kniss</span><span style="color:#8f8f8f">.com</span></div>
<div id="taskbar" class="a"></div>
<svg class="a" style="left:13px;top:876px" width="15" height="15" viewBox="0 0 15 15"><path d="M0 2.1 L6.6 1.2 V7 H0 Z M7.5 1 L15 0 V7 H7.5 Z M0 8 H6.6 V13.8 L0 12.9 Z M7.5 8 H15 V15 L7.5 14 Z" fill="#fff"/></svg>
<div class="a" style="left:40px;top:867px;width:240px;height:33px;background:#f1f1f1"></div>
<svg class="a" style="left:49px;top:876px" width="16" height="15" viewBox="0 0 16 15"><circle cx="10" cy="5.5" r="4.3" fill="none" stroke="#222" stroke-width="1.1"/><path d="M7 8.6 L1.5 14" stroke="#222" stroke-width="1.3"/></svg>
<div class="a" style="left:73px;top:877px;font-size:12.2px;color:#4a4a4a;white-space:nowrap">Taper ici pour rechercher</div>
<svg class="a" style="left:229px;top:868px" width="18" height="30" viewBox="0 0 18 30"><path d="M6 2 L9 10 L11 4 L13 12" fill="none" stroke="#7ab8e8" stroke-width="1.2"/><path d="M7 12 H11 V17 L16 25 Q16 29 9 29 Q2 29 2 25 L7 17 Z" fill="#bfe4f4" stroke="#7ab0d8" stroke-width="0.8"/><path d="M3.5 23 H14.5 L16 25 Q16 29 9 29 Q2 29 2 25 Z" fill="#4cb84c"/></svg>
<svg class="a" style="left:247px;top:869px" width="18" height="29" viewBox="0 0 18 29"><path d="M6 1 H12 L13 10 H5 Z" fill="#d8b880"/><path d="M3 10 H15 L16 13 H2 Z" fill="#9c4a22"/><path d="M3 13 L1 28 M6 13 L5.5 27 M12 13 L12.5 27 M15 13 L17 28" stroke="#9c4a22" stroke-width="2"/></svg>
<svg class="a" style="left:292px;top:876px" width="16" height="15" viewBox="0 0 16 15"><rect x="1" y="3.5" width="9" height="7" fill="none" stroke="#fff" stroke-width="1.2"/><path d="M0 1 H11 M0 13 H11 M13.5 5 V14" stroke="#fff" stroke-width="1.2"/><circle cx="13.5" cy="2.5" r="1.3" fill="#fff"/></svg>
<svg class="a" style="left:328px;top:873px" width="20" height="20" viewBox="0 0 20 20"><rect width="20" height="20" rx="1.5" fill="#0c1a55"/><circle cx="10" cy="10" r="7.5" fill="#fff"/><path d="M4.5 10 H15.5 M7 7.8 L4.5 10 L7 12.2 M13 7.8 L15.5 10 L13 12.2" fill="none" stroke="#0c1a55" stroke-width="1.6"/></svg>
<svg class="a" style="left:362px;top:876px" width="14" height="16" viewBox="0 0 14 16"><path d="M1 1 L4 0 L6 2 L13 1 L12 14 L5 15 L3 13 L2 15 Z" fill="#e8202a"/></svg>
<div class="tb" style="left:384px;top:876px">R&hellip;</div>
<div class="a" style="left:359px;top:898px;width:43px;height:2px;background:#7fa8d4"></div>
<svg class="a" style="left:412px;top:875px" width="20" height="17" viewBox="0 0 20 17"><rect x="7" y="0.5" width="12" height="9" fill="#3aa0e8"/><path d="M1 11 L12 10 L15 14 L3 16 Z" fill="#c8d4dc"/><path d="M9 9.5 V11" stroke="#aaa"/></svg>
<svg class="a" style="left:445px;top:873px" width="20" height="20" viewBox="0 0 20 20"><rect width="20" height="20" fill="#ef3b2d"/><path d="M6.5 6.5 L10 10 L6.5 13.5 L3 10 Z M11 6.5 L14.5 10 L11 13.5 L13 10 Z" fill="#fff"/></svg>
<svg class="a" style="left:478px;top:873px" width="20" height="20" viewBox="0 0 20 20"><path d="M1 10 H19 V19 H1 Z" fill="#c8ccd0"/><rect x="6" y="1" width="12" height="10" fill="#2050c8" stroke="#9ab" stroke-width="0.8"/><rect x="3" y="13" width="14" height="2" fill="#888"/></svg>
<svg class="a" style="left:510px;top:874px" width="19" height="18" viewBox="0 0 19 18"><ellipse cx="9" cy="10" rx="8.5" ry="7" fill="#d8dce0"/><circle cx="5" cy="9" r="1.8" fill="#e84040"/><circle cx="8" cy="6" r="1.6" fill="#40a040"/><circle cx="6" cy="13" r="1.6" fill="#3060d0"/><path d="M12 12 L18 1" stroke="#d8a030" stroke-width="2.4"/></svg>
<div class="tb" style="left:533px;top:876px">In&hellip;</div>
<div class="a" style="left:509px;top:898px;width:43px;height:2px;background:#7fa8d4"></div>
<svg class="a" style="left:561px;top:873px" width="21" height="20" viewBox="0 0 21 20"><rect x="1" y="1" width="5" height="6" fill="#e8c850"/><path d="M6 18 L17 7 M8 8 L18 18" stroke="#c8c8c8" stroke-width="1.8"/><path d="M14 5 L18 4 L20 8" fill="none" stroke="#ddd" stroke-width="2"/><path d="M1 18 V9 M3 18 H14" stroke="#6a6" stroke-width="0.8" stroke-dasharray="1 1"/></svg>
<svg class="a" style="left:593px;top:873px" width="20" height="20" viewBox="0 0 20 20"><circle cx="10" cy="10.5" r="9" fill="#ff7a1a"/><circle cx="10" cy="11" r="5.5" fill="#7b3fc8"/><path d="M3 6 Q7 -1 15 2 Q19 5 19 10 Q16 4 11 5 Q6 6 3 6Z" fill="#ffbb2a"/></svg>
<div class="tb" style="left:616px;top:876px">l&hellip;</div>
<div class="a" style="left:592px;top:898px;width:43px;height:2px;background:#7fa8d4"></div>
<svg class="a" style="left:644px;top:874px" width="18" height="19" viewBox="0 0 18 19"><path d="M4 1 L17 3 L13 18 L1 15 Z" fill="#a8dcec" stroke="#6fb8cc" stroke-width="0.8"/></svg>
<div class="tb" style="left:667px;top:876px">*S&hellip;</div>
<div class="a" style="left:642px;top:898px;width:43px;height:2px;background:#7fa8d4"></div>
<svg class="a" style="left:695px;top:874px" width="20" height="18" viewBox="0 0 20 18"><rect x="6" y="0" width="14" height="18" rx="1" fill="#2b7cd3"/><rect x="6" y="6" width="14" height="6" fill="#185abd"/><rect x="0" y="3.5" width="11" height="11" rx="1" fill="#1a5bbd"/><path d="M1.8 6 L3.5 12 L5.5 7.5 L7.5 12 L9.2 6" fill="none" stroke="#fff" stroke-width="1.2"/></svg>
<svg class="a" style="left:727px;top:874px" width="21" height="18" viewBox="0 0 21 18"><rect x="6" y="0" width="15" height="18" rx="1" fill="#21a366"/><rect x="6" y="6" width="15" height="6" fill="#107c41"/><rect x="0" y="3.5" width="11" height="11" rx="1" fill="#0e6b36"/><path d="M2.8 6 L8 12.5 M8 6 L2.8 12.5" stroke="#fff" stroke-width="1.5"/></svg>
<svg class="a" style="left:761px;top:874px" width="18" height="18" viewBox="0 0 18 18"><rect width="18" height="18" fill="#2f6fc8"/><path d="M4.5 3 V15 M13.5 3 V15 M4.5 9 H13.5" stroke="#fff" stroke-width="2.8"/></svg>
<svg class="a" style="left:793px;top:873px" width="19" height="20" viewBox="0 0 19 20"><rect x="2" y="1" width="5" height="4" fill="#c8a868"/><rect x="8" y="1" width="5" height="4" fill="#78b078"/><rect x="2" y="6" width="5" height="4" fill="#b878b8"/><rect x="8" y="6" width="5" height="4" fill="#c8c848"/><rect x="13" y="6" width="5" height="4" fill="#78a8c8"/><rect x="0" y="15" width="19" height="4" fill="#8a9aa8"/><circle cx="9.5" cy="17" r="1.2" fill="#fff"/></svg>
<svg class="a" style="left:826px;top:873px" width="14" height="19" viewBox="0 0 14 19"><path d="M1 3 Q1 0 4 0.5 Q7 1.5 10 0.5 Q13 0 13 3 Q13 8 11 11 L10 18 Q9 19 8 17 L7 12 L6 17 Q5 19 4 18 L3 11 Q1 8 1 3 Z" fill="#e4f2fb" stroke="#88c0e4" stroke-width="0.8"/></svg>
<div class="tb" style="left:849px;top:876px">|&hellip;</div>
<div class="a" style="left:823px;top:898px;width:43px;height:2px;background:#7fa8d4"></div>
<svg class="a" style="left:875px;top:873px" width="14" height="19" viewBox="0 0 14 19"><path d="M1 3 Q1 0 4 0.5 Q7 1.5 10 0.5 Q13 0 13 3 Q13 8 11 11 L10 18 Q9 19 8 17 L7 12 L6 17 Q5 19 4 18 L3 11 Q1 8 1 3 Z" fill="#e4f2fb" stroke="#88c0e4" stroke-width="0.8"/></svg>
<div class="tb" style="left:896px;top:876px">Li&hellip;</div>
<div class="a" style="left:872px;top:898px;width:43px;height:2px;background:#7fa8d4"></div>
<div class="a" style="left:917px;top:867px;width:49px;height:33px;background:#3b4a55"></div>
<svg class="a" style="left:924px;top:873px" width="17" height="20" viewBox="0 0 17 20"><path d="M1 3 Q1 0 4 0.5 Q7 1.5 10 0.5 Q13 0 13 3 Q13 8 11 11 L10 18 Q9 19 8 17 L7 12 L6 17 Q5 19 4 18 L3 11 Q1 8 1 3 Z" fill="#e4f2fb" stroke="#88c0e4" stroke-width="0.8"/><circle cx="12.5" cy="16" r="3" fill="none" stroke="#333" stroke-width="1.2"/></svg>
<div class="tb" style="left:944px;top:876px">Ea&hellip;</div>
<div class="a" style="left:917px;top:898px;width:49px;height:2px;background:#9cc4e8"></div>
<svg class="a" style="left:972px;top:873px" width="20" height="20" viewBox="0 0 20 20"><path d="M1 12 L10 4 L13 7 L4 16 Z" fill="#d0e4f0"/><path d="M2 18 L9 11" stroke="#c8d8e4" stroke-width="2"/><circle cx="15" cy="4.5" r="3.5" fill="#fff" stroke="#d84040" stroke-width="1"/><rect x="13" y="9" width="5" height="9" fill="#fff"/></svg>
<svg class="a" style="left:1006px;top:873px" width="17" height="20" viewBox="0 0 17 20"><path d="M8.5 4 Q16 3 16 10 Q15 17 8 19.5 Q1 17 1 10 Q1 3 8.5 4 Z" fill="#e02828"/><path d="M5 2 L8.5 4.5 L12 2 L10 0.5 L8.5 2 L7 0.5 Z" fill="#3a9a3a"/></svg>
<svg class="a" style="left:1038px;top:874px" width="19" height="19" viewBox="0 0 19 19"><circle cx="5.5" cy="12.5" r="5" fill="#111"/><circle cx="13" cy="5" r="4" fill="#111"/><circle cx="15" cy="13" r="3.2" fill="#111"/><circle cx="5.5" cy="12.5" r="1.8" fill="#1c2c3c"/><circle cx="13" cy="5" r="1.4" fill="#1c2c3c"/></svg>
<svg class="a" style="left:1070px;top:873px" width="21" height="20" viewBox="0 0 21 20"><rect x="3" y="0" width="15" height="15" fill="#f0e0e0" stroke="#c84040" stroke-width="1"/><circle cx="7" cy="8" r="3.2" fill="#e8b088"/><path d="M1 19 Q1 12 7 12 Q12 12 12 19 Z" fill="#f4f4f4"/><ellipse cx="15" cy="15.5" rx="5" ry="3.5" fill="#e8c030"/></svg>
<svg class="a" style="left:1102px;top:873px" width="21" height="20" viewBox="0 0 21 20"><circle cx="6" cy="4.5" r="3.6" fill="none" stroke="#e8a868" stroke-width="2"/><path d="M4 7 L1 11" stroke="#e8a868" stroke-width="2"/><path d="M13 1 H20 V10 H13 Z" fill="#e8e8e8" stroke="#888" stroke-width="0.8"/><path d="M4 13 L8 10 L12 13 V19 H4 Z" fill="#d8c8a8"/><path d="M16 12 V19" stroke="#3a7ad8" stroke-width="1.5"/></svg>
<svg class="a" style="left:1134px;top:873px" width="21" height="20" viewBox="0 0 21 20"><path d="M3 6 L11 1 L19 6 Z" fill="#f0e8d8" stroke="#9a8a6a" stroke-width="0.8"/><rect x="5" y="7" width="13" height="9" fill="#f4f0e8" stroke="#9a8a6a" stroke-width="0.8"/><rect x="3" y="16" width="17" height="3" fill="#e8e0d0"/><circle cx="4.5" cy="13" r="3" fill="none" stroke="#e8a868" stroke-width="2"/></svg>
<svg class="a" style="left:1165px;top:873px" width="21" height="20" viewBox="0 0 21 20"><path d="M15 0 L21 3 V17 L15 20 L5 11 L2 14 L0 13 V7 L2 6 L5 9 Z M15 5 L9 10 L15 15 Z" fill="#8a4fd8"/></svg>
<div class="tb" style="left:1189px;top:876px">D&hellip;</div>
<div class="a" style="left:1165px;top:898px;width:42px;height:2px;background:#7fa8d4"></div>
<svg class="a" style="left:1216px;top:873px" width="21" height="21" viewBox="0 0 21 21"><path d="M3.2 16 A9 9 0 1 1 6 18.2 L1.5 19.5 Z" fill="none" stroke="#2ec55a" stroke-width="2"/><path d="M7 6 Q6 9 9 12.5 Q12 15.5 15 14.5 L15.5 12.5 L13 11.5 L12 12.5 Q9.5 11 8.5 8.5 L9.5 7.5 L8.5 5 Z" fill="#2ec55a"/></svg>
<svg class="a" style="left:1250px;top:874px" width="16" height="18" viewBox="0 0 16 18"><rect x="0.5" y="1" width="15" height="16" fill="#eaf2f8" stroke="#88a8c4" stroke-width="0.8"/><rect x="0.5" y="1" width="15" height="3" fill="#a8c4dc"/><path d="M3 11 L6 7 L9 12 L12 8" fill="none" stroke="#e8a040" stroke-width="1.2"/></svg>
<div class="tb" style="left:1270px;top:876px">In&hellip;</div>
<div class="a" style="left:1247px;top:898px;width:41px;height:2px;background:#7fa8d4"></div>
<svg class="a" style="left:1304px;top:874px" width="19" height="19" viewBox="0 0 19 19"><defs><radialGradient id="og" cx="0.4" cy="0.35" r="0.7"><stop offset="0" stop-color="#ffc040"/><stop offset="1" stop-color="#f06a00"/></radialGradient></defs><circle cx="9.5" cy="9.5" r="9" fill="url(#og)"/></svg>
<svg class="a" style="left:1345px;top:879px" width="12" height="8" viewBox="0 0 12 8"><path d="M1 7 L6 2 L11 7" fill="none" stroke="#fff" stroke-width="1.1"/></svg>
<svg class="a" style="left:1364px;top:877px" width="14" height="12" viewBox="0 0 14 12"><rect x="4" y="3" width="9.5" height="6.5" fill="none" stroke="#fff" stroke-width="1"/><rect x="5.5" y="4.5" width="6" height="3.5" fill="#fff"/><path d="M0.5 1 V6 M2.5 1 V6 M0 5 H4" stroke="#fff" stroke-width="1"/></svg>
<svg class="a" style="left:1384px;top:877px" width="15" height="13" viewBox="0 0 15 13"><path d="M1 4.5 H3.5 L7 1.5 V11.5 L3.5 8.5 H1 Z" fill="none" stroke="#fff" stroke-width="1"/><path d="M9 4 Q10.5 6.5 9 9 M11 2.5 Q13.5 6.5 11 10.5" fill="none" stroke="#9aa" stroke-width="1"/></svg>
<svg class="a" style="left:1406px;top:878px" width="13" height="12" viewBox="0 0 13 12"><path d="M1 10 Q2 3 11 1 M3.5 10.5 Q4.5 6 10.5 4 M6 11 Q7 8.5 10 7.5" fill="none" stroke="#c8d0d8" stroke-width="1"/><circle cx="10" cy="10" r="1.2" fill="#fff"/></svg>
<svg class="a" style="left:1424px;top:876px" width="16" height="16" viewBox="0 0 16 16"><rect x="0.5" y="1" width="13" height="10" fill="none" stroke="#fff" stroke-width="1"/><path d="M5 4 Q8 3 8 6 Q5 7 8 9" fill="none" stroke="#fff" stroke-width="1"/><circle cx="12.5" cy="12.5" r="2.8" fill="#f6a21a"/></svg>
<svg class="a" style="left:1447px;top:877px" width="15" height="13" viewBox="0 0 15 13"><path d="M1 12 Q3 6 6 5 Q8 2 9 1 M4 12 L9 4 Q10 2 12 3 L13 6 Q10 8 8 8 M2 10 Q6 8 13 8" fill="none" stroke="#fff" stroke-width="1"/></svg>
<div class="tb" style="left:1473px;top:876px;font-size:11px;transform:scaleX(0.84);transform-origin:0 0">FRA</div>
<div class="tb" style="left:1516px;top:870px;font-size:10.5px;transform:scaleX(0.82);transform-origin:0 0">14:28</div>
<div class="tb" style="left:1503px;top:884px;font-size:10.5px;transform:scaleX(0.9);transform-origin:0 0">15/05/2024</div>
<svg class="a" style="left:1565px;top:876px" width="15" height="15" viewBox="0 0 15 15"><path d="M0.5 1 H14 V11 H6 L3 14 V11 H0.5 Z" fill="#fff"/><path d="M3 4 H11 M3 6.5 H11 M3 9 H8" stroke="#1b2a45" stroke-width="1"/></svg>

</body></html>
